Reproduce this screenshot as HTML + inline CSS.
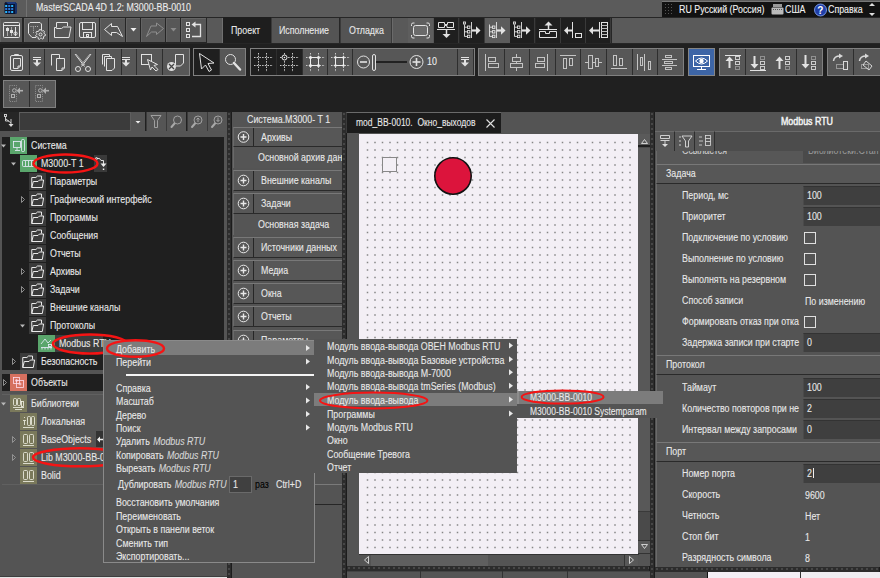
<!DOCTYPE html><html><head><meta charset="utf-8"><style>
*{margin:0;padding:0;box-sizing:border-box}
html,body{width:880px;height:578px;overflow:hidden;background:#202020;font-family:"Liberation Sans", sans-serif;}
body>div{position:absolute}
.t{position:absolute;white-space:nowrap;font-size:10px;line-height:12px;color:#e8e8e8;-webkit-text-stroke:0.1px;transform:scaleX(0.885);transform-origin:0 0}
svg{position:absolute;overflow:visible}
.spl{background-color:#2c2c2c;border-right:1px solid #1c1c1c;background-image:radial-gradient(circle at 2px 2px,#474747 0 1px,transparent 1.5px);background-size:5px 5px}
</style></head><body>
<div style="left:0px;top:0px;width:880px;height:17px;background:#5b5b5b"></div>
<div style="left:26px;top:0px;width:1px;height:17px;background:#737373"></div>
<svg style="left:0;top:0" width="880" height="578"><path d="M6 2 H15 L17 4 V12 Q17 14 15 14 H6.5 Q4.5 14 4.5 12 V3.5 Q4.5 2 6 2 Z" fill="#0a1430"/><path d="M6 2 H15 L17 4 H8 Z" fill="#1b3a80"/><path d="M15 2 L17 4 V13 L15 14 Z" fill="#15306a"/><rect x="5.2" y="5.0" width="2" height="2" fill="#27b8ff"/><rect x="5.2" y="8.0" width="2" height="2" fill="#2a78d8"/><rect x="5.2" y="11.0" width="2" height="2" fill="#27b8ff"/><rect x="8.2" y="5.0" width="2" height="2" fill="#2a78d8"/><rect x="8.2" y="8.0" width="2" height="2" fill="#2a78d8"/><rect x="8.2" y="11.0" width="2" height="2" fill="#2a78d8"/><rect x="11.2" y="5.0" width="2" height="2" fill="#27b8ff"/><rect x="11.2" y="8.0" width="2" height="2" fill="#2a78d8"/><rect x="11.2" y="11.0" width="2" height="2" fill="#27b8ff"/></svg>
<div class="t" style="left:36px;top:2px;color:#ececec">MasterSCADA 4D 1.2: M3000-BB-0010</div>
<div style="left:662px;top:1px;width:218px;height:18px;background:#121212;border-top:1px solid #777"></div>
<svg style="left:0;top:0" width="880" height="578"><g fill="#555"><rect x="665" y="4" width="1" height="1"/><rect x="665" y="7" width="1" height="1"/><rect x="665" y="10" width="1" height="1"/><rect x="665" y="13" width="1" height="1"/><rect x="668" y="4" width="1" height="1"/><rect x="668" y="7" width="1" height="1"/><rect x="668" y="10" width="1" height="1"/><rect x="668" y="13" width="1" height="1"/><rect x="671" y="4" width="1" height="1"/><rect x="671" y="7" width="1" height="1"/><rect x="671" y="10" width="1" height="1"/><rect x="671" y="13" width="1" height="1"/></g></svg>
<div class="t" style="left:679px;top:4px;color:#f2f2f2;">RU Русский (Россия)</div>
<svg style="left:0;top:0" width="880" height="578"><rect x="771.5" y="7.5" width="12" height="7" rx="1" fill="#bbb"/><rect x="773" y="4" width="9" height="3" fill="#999"/><rect x="773" y="9" width="1" height="1" fill="#555"/><rect x="775" y="9" width="1" height="1" fill="#555"/><rect x="777" y="9" width="1" height="1" fill="#555"/><rect x="779" y="9" width="1" height="1" fill="#555"/><rect x="781" y="9" width="1" height="1" fill="#555"/></svg>
<div class="t" style="left:785px;top:4px;color:#f2f2f2;">США</div>
<svg style="left:0;top:0" width="880" height="578"><circle cx="820.5" cy="10" r="6" fill="#1f3fa8" stroke="#8fb0ff" stroke-width="0.8"/><text x="817.3" y="14" font-family="Liberation Sans" font-weight="bold" font-size="10" fill="#fff">?</text></svg>
<div class="t" style="left:828px;top:4px;color:#f2f2f2;">Справка</div>
<svg style="left:0;top:0" width="880" height="578"><polygon points="869,6 875,6 872,3" fill="#ddd"/><polygon points="869,13 875,13 872,16" fill="#ddd"/></svg>
<div style="left:0px;top:17px;width:880px;height:27px;background:#262626"></div>
<div style="left:0px;top:18px;width:22px;height:24px;background:#575757;border-top:1px solid #656565;border-left:1px solid #636363"></div>
<div style="left:24px;top:18px;width:24px;height:24px;background:#575757;border-top:1px solid #656565;border-left:1px solid #636363"></div>
<div style="left:49px;top:18px;width:25px;height:24px;background:#575757;border-top:1px solid #656565;border-left:1px solid #636363"></div>
<div style="left:75px;top:18px;width:24px;height:24px;background:#575757;border-top:1px solid #656565;border-left:1px solid #636363"></div>
<div style="left:100px;top:18px;width:25px;height:24px;background:#575757;border-top:1px solid #656565;border-left:1px solid #636363"></div>
<div style="left:126px;top:18px;width:14px;height:24px;background:#575757;border-top:1px solid #656565;border-left:1px solid #636363"></div>
<div style="left:141px;top:18px;width:24px;height:24px;background:#575757;border-top:1px solid #656565;border-left:1px solid #636363"></div>
<div style="left:166px;top:18px;width:14px;height:24px;background:#575757;border-top:1px solid #656565;border-left:1px solid #636363"></div>
<div style="left:181px;top:18px;width:25px;height:24px;background:#575757;border-top:1px solid #656565;border-left:1px solid #636363"></div>
<div style="left:207px;top:18px;width:16px;height:25px;background:#595959;border-right:1px solid #707070"></div>
<div style="left:223px;top:17px;width:48px;height:26px;background:#1e1e1e"></div>
<div class="t" style="left:231px;top:25px;">Проект</div>
<div style="left:271px;top:18px;width:68px;height:25px;background:#545454;border-left:1px solid #3a3a3a"></div>
<div class="t" style="left:279px;top:25px;">Исполнение</div>
<div style="left:340px;top:18px;width:51px;height:25px;background:#545454;border-left:1px solid #3a3a3a"></div>
<div class="t" style="left:349px;top:25px;">Отладка</div>
<div style="left:391px;top:18px;width:1px;height:25px;background:#3a3a3a"></div>
<div style="left:392px;top:18px;width:16px;height:25px;background:#595959;border-left:1px solid #6a6a6a"></div>
<div style="left:408px;top:18px;width:25px;height:25px;background:#5e5e5e"></div>
<div style="left:433px;top:18px;width:1px;height:25px;background:#555"></div>
<div style="left:434px;top:18px;width:25px;height:25px;background:#1f1f1f;border-right:1px solid #3a3a3a"></div>
<div style="left:460px;top:18px;width:25px;height:25px;background:#1f1f1f;border-right:1px solid #3a3a3a"></div>
<div style="left:510px;top:18px;width:25px;height:25px;background:#1f1f1f;border-right:1px solid #3a3a3a"></div>
<div style="left:536px;top:18px;width:25px;height:25px;background:#1f1f1f;border-right:1px solid #3a3a3a"></div>
<div style="left:561px;top:18px;width:25px;height:25px;background:#1f1f1f;border-right:1px solid #3a3a3a"></div>
<div style="left:586px;top:18px;width:25px;height:25px;background:#1f1f1f;border-right:1px solid #3a3a3a"></div>
<div style="left:485px;top:18px;width:25px;height:25px;background:#5c5c5c"></div>
<div style="left:612px;top:18px;width:268px;height:25px;background:#5a5a5a"></div>
<div style="left:3px;top:48px;width:187px;height:28px;background:#2e2e2e;border:1px solid #808080"></div>
<div style="left:4px;top:49px;width:25px;height:26px;background:#575757"></div>
<div style="left:30px;top:49px;width:14px;height:26px;background:#575757"></div>
<div style="left:45px;top:49px;width:25px;height:26px;background:#575757"></div>
<div style="left:71px;top:49px;width:24px;height:26px;background:#575757"></div>
<div style="left:96px;top:49px;width:25px;height:26px;background:#575757"></div>
<div style="left:122px;top:49px;width:14px;height:26px;background:#575757"></div>
<div style="left:137px;top:49px;width:25px;height:26px;background:#575757"></div>
<div style="left:163px;top:49px;width:26px;height:26px;background:#575757"></div>
<div style="left:193px;top:48px;width:53px;height:28px;background:#2e2e2e;border:1px solid #808080"></div>
<div style="left:194px;top:49px;width:25px;height:26px;background:#1f1f1f"></div>
<div style="left:220px;top:49px;width:25px;height:26px;background:#575757"></div>
<div style="left:250px;top:48px;width:225px;height:28px;background:#2e2e2e;border:1px solid #808080"></div>
<div style="left:251px;top:49px;width:25px;height:26px;background:#1f1f1f"></div>
<div style="left:277px;top:49px;width:25px;height:26px;background:#1f1f1f"></div>
<div style="left:303px;top:49px;width:24px;height:26px;background:#575757"></div>
<div style="left:328px;top:49px;width:24px;height:26px;background:#575757"></div>
<div style="left:353px;top:49px;width:104px;height:26px;background:#575757"></div>
<div style="left:458px;top:49px;width:15px;height:26px;background:#575757"></div>
<div class="t" style="left:427px;top:56px;font-size:10px;color:#f0f0f0">10</div>
<div style="left:478px;top:48px;width:206px;height:28px;background:#2e2e2e;border:1px solid #808080"></div>
<div style="left:479.0px;top:49px;width:24.6px;height:26px;background:#575757"></div>
<div style="left:504.6px;top:49px;width:24.6px;height:26px;background:#575757"></div>
<div style="left:530.2px;top:49px;width:24.6px;height:26px;background:#575757"></div>
<div style="left:555.8px;top:49px;width:24.6px;height:26px;background:#575757"></div>
<div style="left:581.4px;top:49px;width:24.6px;height:26px;background:#575757"></div>
<div style="left:607.0px;top:49px;width:24.6px;height:26px;background:#575757"></div>
<div style="left:632.6px;top:49px;width:24.6px;height:26px;background:#575757"></div>
<div style="left:658.2px;top:49px;width:24.6px;height:26px;background:#575757"></div>
<div style="left:688px;top:48px;width:27px;height:28px;background:#3d65a6;border:1px solid #858585"></div>
<div style="left:719px;top:48px;width:104px;height:28px;background:#2e2e2e;border:1px solid #808080"></div>
<div style="left:720px;top:49px;width:25px;height:26px;background:#575757"></div>
<div style="left:746px;top:49px;width:25px;height:26px;background:#575757"></div>
<div style="left:771px;top:49px;width:25px;height:26px;background:#575757"></div>
<div style="left:797px;top:49px;width:25px;height:26px;background:#575757"></div>
<div style="left:827px;top:48px;width:55px;height:28px;background:#2e2e2e;border:1px solid #808080"></div>
<div style="left:828px;top:49px;width:25px;height:26px;background:#575757"></div>
<div style="left:854px;top:49px;width:26px;height:26px;background:#575757"></div>
<div style="left:3px;top:80px;width:53px;height:28px;background:#2e2e2e;border:1px solid #808080"></div>
<div style="left:4px;top:81px;width:25px;height:26px;background:#575757"></div>
<div style="left:30px;top:81px;width:25px;height:26px;background:#575757"></div>
<svg style="left:0;top:0" width="880" height="578"><g stroke="#e2e2e2" fill="none" stroke-width="1"><rect x="3.5" y="22.5" width="16" height="15" rx="1"/><line x1="3.5" y1="25.5" x2="19.5" y2="25.5"/><line x1="7.5" y1="27" x2="7.5" y2="36" stroke="#aaa"/><line x1="11.5" y1="27" x2="11.5" y2="36" stroke="#aaa"/><line x1="15.5" y1="27" x2="15.5" y2="36"/></g><g fill="#e2e2e2"><rect x="6" y="28" width="3" height="3"/><rect x="10" y="30" width="3" height="3"/><circle cx="15.5" cy="33.5" r="1.6" fill="none" stroke="#e2e2e2"/></g><g stroke="#e2e2e2" fill="none" stroke-width="1"><path d="M28.5 33.5 V24 L30 22.5 H40 L41.5 24 V30"/><path d="M28.5 33.5 L32 37.5 H36"/><path d="M30.5 26.5 H38" stroke="#bbb" stroke-dasharray="1 1.2"/><path d="M33.5 27.5 V33" stroke="#bbb" stroke-dasharray="1 1.2"/><path d="M45.50 34.50 L45.37 35.61 L43.92 36.15 L43.47 36.87 L43.62 38.41 L42.67 39.00 L41.35 38.20 L40.50 38.30 L39.39 39.37 L38.33 39.00 L38.13 37.47 L37.53 36.87 L36.00 36.67 L35.63 35.61 L36.70 34.50 L36.80 33.65 L36.00 32.33 L36.59 31.38 L38.13 31.53 L38.85 31.08 L39.39 29.63 L40.50 29.50 L41.35 30.80 L42.15 31.08 L43.62 30.59 L44.41 31.38 L43.92 32.85 L44.20 33.65 Z" fill="#575757"/><circle cx="40.5" cy="34.5" r="1.5"/></g><g stroke="#e2e2e2" fill="none" stroke-width="1"><path d="M56.5 27 V22.5 H67.5 V26"/><path d="M54.5 37.5 V27.5 H56.5 M54.5 37.5 H69 L71 27 H63.5 L61.5 28.5 H56.5 V27.5"/></g><g stroke="#e2e2e2" fill="none" stroke-width="1"><rect x="79.5" y="22.5" width="16" height="15" rx="1.5"/><rect x="82.5" y="22.5" width="10" height="7"/><rect x="83.5" y="32.5" width="8" height="5"/><rect x="86.5" y="34.5" width="2" height="2"/></g><polygon points="104.5,29.5 111.5,23.5 111.5,26.5 117.5,26.5 122.5,36.5 116.5,32.5 111.5,32.5 111.5,35.5" fill="none" stroke="#e2e2e2" stroke-linejoin="round"/><polygon points="130.5,28 136.5,28 133.5,31.5" fill="#eee"/><polygon points="163.5,28.5 156.5,23 156.5,26 151,26 146.5,36.5 151.5,32 156.5,32 156.5,34.5" fill="none" stroke="#8e8e8e" stroke-linejoin="round"/><polygon points="170.5,28 176.5,28 173.5,31.5" fill="#8a8a8a"/><g stroke="#e2e2e2" fill="none"><rect x="186.5" y="22.5" width="3" height="3"/><rect x="186.5" y="28.5" width="3" height="3"/><rect x="186.5" y="34.5" width="3" height="3"/><path d="M192 36.5 H200.5 V24.5 H194" stroke-width="1.3"/></g><polygon points="191.5,24.5 195.5,21.5 195.5,27.5" fill="#e2e2e2"/><g stroke="#e2e2e2" fill="none"><rect x="413.5" y="25.5" width="14" height="10" rx="2" fill="#6a6a6a"/><path d="M411.5 26 V24.5 Q411.5 23 413 23 H414.5 M426.5 23 H428 Q429.5 23 429.5 24.5 V26 M429.5 35 V36.5 Q429.5 38 428 38 H426.5 M414.5 38 H413 Q411.5 38 411.5 36.5 V35"/></g><g stroke="#e2e2e2" fill="none"><path d="M438.5 27.5 V22.5 H444.5 V24.5 H447.5 V22.5 H453.5 V27.5 H447 V25.5 H444.5 V27.5 Z"/><line x1="437" y1="29.5" x2="455" y2="29.5"/><line x1="446.5" y1="29.5" x2="446.5" y2="35" stroke-width="1.5"/></g><polygon points="442.5,34 450.5,34 446.5,38" fill="#e2e2e2"/><g stroke="#e2e2e2" fill="none" stroke-width="0.9"><rect x="463.5" y="22" width="2" height="2"/><line x1="464.5" y1="24.5" x2="464.5" y2="36.5"/><rect x="467.5" y="26.0" width="2.4" height="2.4"/><line x1="464.5" y1="27.2" x2="467.5" y2="27.2"/><rect x="467.5" y="30.6" width="2.4" height="2.4"/><line x1="464.5" y1="31.8" x2="467.5" y2="31.8"/><rect x="467.5" y="35.199999999999996" width="2.4" height="2.4"/><line x1="464.5" y1="36.4" x2="467.5" y2="36.4"/><line x1="471.5" y1="22" x2="471.5" y2="38"/><line x1="472" y1="30.5" x2="477" y2="30.5" stroke-width="2.2"/></g><polygon points="476,26.3 480.5,30.5 476,34.7" fill="#e2e2e2"/><g stroke="#e2e2e2" fill="none" stroke-width="0.9"><line x1="489.5" y1="24.5" x2="489.5" y2="36.5"/><rect x="492.5" y="26.0" width="2.4" height="2.4"/><line x1="489.5" y1="27.2" x2="492.5" y2="27.2"/><rect x="492.5" y="30.6" width="2.4" height="2.4"/><line x1="489.5" y1="31.8" x2="492.5" y2="31.8"/><rect x="492.5" y="35.199999999999996" width="2.4" height="2.4"/><line x1="489.5" y1="36.4" x2="492.5" y2="36.4"/><line x1="496.5" y1="22" x2="496.5" y2="38"/><line x1="497" y1="30.5" x2="502" y2="30.5" stroke-width="2.2"/></g><polygon points="501,26.3 505.5,30.5 501,34.7" fill="#e2e2e2"/><g stroke="#e2e2e2" fill="none" stroke-width="0.9"><rect x="513.5" y="22" width="2" height="2"/><line x1="514.5" y1="24.5" x2="514.5" y2="36.5"/><rect x="517.5" y="26.0" width="2.4" height="2.4"/><line x1="514.5" y1="27.2" x2="517.5" y2="27.2"/><rect x="517.5" y="30.6" width="2.4" height="2.4"/><line x1="514.5" y1="31.8" x2="517.5" y2="31.8"/><rect x="517.5" y="35.199999999999996" width="2.4" height="2.4"/><line x1="514.5" y1="36.4" x2="517.5" y2="36.4"/><line x1="521.5" y1="22" x2="521.5" y2="38"/><line x1="522" y1="30.5" x2="527" y2="30.5" stroke-width="2.2"/></g><polygon points="526,26.3 530.5,30.5 526,34.7" fill="#e2e2e2"/><g stroke="#e2e2e2" fill="none"><line x1="539" y1="29.5" x2="557" y2="29.5"/><line x1="548.5" y1="23" x2="548.5" y2="29" stroke-width="1.5"/><path d="M539.5 37.5 V31.5 H545.5 V33.5 H549.5 V31.5 H556.5 V37.5 Z"/></g><polygon points="544.5,25.5 552.5,25.5 548.5,21.5" fill="#e2e2e2"/><g stroke="#e2e2e2" fill="none"><line x1="572.5" y1="22" x2="572.5" y2="38"/><line x1="567" y1="30.5" x2="572" y2="30.5" stroke-width="2"/><rect x="575.5" y="33.5" width="6" height="4"/></g><polygon points="568,26.5 564,30.5 568,34.5" fill="#e2e2e2"/><g stroke="#e2e2e2" fill="none"><line x1="599.5" y1="22" x2="599.5" y2="38"/><line x1="592" y1="30.5" x2="599" y2="30.5" stroke-width="2"/><rect x="601.5" y="22.5" width="6" height="15"/><path d="M601.5 25.5 H607.5 M601.5 28.5 H607.5 M601.5 31.5 H607.5 M601.5 34.5 H607.5" stroke="#bbb"/></g><polygon points="593,26.5 589,30.5 593,34.5" fill="#e2e2e2"/><g stroke="#e2e2e2" fill="none"><rect x="10.5" y="55.5" width="12" height="15" rx="1.5"/><path d="M14.5 56 V54.5 H18.5 V56"/><path d="M13.5 58.5 H20.5 V66 L18 68.5 H13.5 Z"/><path d="M18 68.5 V66 H20.5"/></g><g stroke="#e2e2e2"><line x1="33" y1="57.5" x2="41" y2="57.5"/><line x1="33" y1="59.5" x2="41" y2="59.5"/></g><rect x="36" y="60" width="2" height="3" fill="#e2e2e2"/><polygon points="33,62.5 41,62.5 37,66.5" fill="#e2e2e2"/><g stroke="#e2e2e2"><line x1="122" y1="57.5" x2="130" y2="57.5"/><line x1="122" y1="59.5" x2="130" y2="59.5"/></g><rect x="125" y="60" width="2" height="3" fill="#e2e2e2"/><polygon points="122,62.5 130,62.5 126,66.5" fill="#e2e2e2"/><g stroke="#e2e2e2" fill="none"><path d="M51.5 65.5 V54.5 H59.5 V58.5"/><path d="M56.5 58.5 H64.5 V68 L62 70.5 H56.5 Z" /><path d="M62 70.5 V68 H64.5"/></g><g stroke="#e2e2e2" fill="none"><circle cx="78" cy="69" r="2.5"/><circle cx="88" cy="69" r="2.5"/><path d="M75 54 L84.5 66.5 M91 54 L81.5 66.5"/><path d="M76 54 L85 65 M90 54 L81 65" stroke="#aaa"/></g><g stroke="#e2e2e2" fill="none"><path d="M102.5 64.5 V54.5 H109.5 V56"/><path d="M104.5 66.5 V56.5 H111.5 V58"/><path d="M106.5 58.5 H114.5 V68 L112 70.5 H106.5 Z"/></g><g stroke="#e2e2e2" fill="none"><rect x="141.5" y="54.5" width="10" height="10"/><polygon points="147.5,59.5 157.5,64.5 154,65.5 158,69.5 156,71 152,67 150.5,70" fill="#5a5a5a"/></g><g stroke="#e2e2e2" fill="none"><path d="M175.5 65 V54.5 H183.5 V63 L180.5 66 H176"/></g><circle cx="171.5" cy="66.5" r="4.5" fill="#ddd"/><path d="M169 64 L174 69 M174 64 L169 69" stroke="#444" stroke-width="1.3"/><polygon points="199.5,53.5 214,63 208,63.5 211.5,70 209,71.5 205.5,65 201.5,69" fill="none" stroke="#e2e2e2" stroke-linejoin="round"/><g stroke="#e2e2e2" fill="none"><circle cx="230.5" cy="59.5" r="5"/><line x1="234" y1="63" x2="240" y2="69.5" stroke-width="2.5" stroke-linecap="round"/></g><g stroke="#c8c8c8" stroke-dasharray="1.5 1.2" fill="none"><line x1="258.5" y1="53" x2="258.5" y2="72"/><line x1="266.5" y1="53" x2="266.5" y2="72"/><line x1="254" y1="57.5" x2="273" y2="57.5"/><line x1="254" y1="65.5" x2="273" y2="65.5"/></g><g stroke="#c8c8c8" stroke-dasharray="1.5 1.2" fill="none"><line x1="284.5" y1="53" x2="284.5" y2="72"/><line x1="292.5" y1="53" x2="292.5" y2="72"/><line x1="280" y1="57.5" x2="299" y2="57.5"/><line x1="280" y1="65.5" x2="299" y2="65.5"/></g><circle cx="284.5" cy="57.5" r="2.5" fill="#222" stroke="#eee"/><circle cx="284.5" cy="57.5" r="0.8" fill="#eee"/><g stroke="#c8c8c8" stroke-dasharray="1.5 1.2" fill="none"><line x1="310.5" y1="53" x2="310.5" y2="72"/><line x1="318.5" y1="53" x2="318.5" y2="72"/><line x1="306" y1="57.5" x2="325" y2="57.5"/><line x1="306" y1="65.5" x2="325" y2="65.5"/></g><rect x="310.5" y="57.5" width="8" height="8" fill="none" stroke="#eee"/><circle cx="310.5" cy="57.5" r="1.5" fill="#eee"/><circle cx="318.5" cy="57.5" r="1.5" fill="#eee"/><circle cx="310.5" cy="65.5" r="1.5" fill="#eee"/><circle cx="318.5" cy="65.5" r="1.5" fill="#eee"/><g stroke="#c8c8c8" stroke-dasharray="1.5 1.2" fill="none"><line x1="335.5" y1="53" x2="335.5" y2="72"/><line x1="343.5" y1="53" x2="343.5" y2="72"/><line x1="331" y1="57.5" x2="350" y2="57.5"/><line x1="331" y1="65.5" x2="350" y2="65.5"/></g><rect x="335.5" y="57.5" width="8" height="8" fill="none" stroke="#eee"/><circle cx="335.5" cy="57.5" r="1.2" fill="#eee"/><circle cx="343.5" cy="57.5" r="1.2" fill="#eee"/><circle cx="335.5" cy="65.5" r="1.2" fill="#eee"/><circle cx="343.5" cy="65.5" r="1.2" fill="#eee"/><g stroke="#e2e2e2" fill="none"><circle cx="363.5" cy="62" r="6"/><line x1="360" y1="62" x2="367" y2="62" stroke-width="1.6"/><rect x="372.5" y="54.5" width="3" height="16" rx="1.5"/><line x1="376" y1="62" x2="407" y2="62" stroke="#222" stroke-width="2"/><circle cx="416.5" cy="62" r="6.5"/><line x1="412.5" y1="62" x2="420.5" y2="62" stroke-width="1.6"/><line x1="416.5" y1="58" x2="416.5" y2="66" stroke-width="1.6"/></g><g stroke="#e2e2e2"><line x1="461" y1="57.5" x2="469" y2="57.5"/><line x1="461" y1="59.5" x2="469" y2="59.5"/></g><rect x="464" y="60" width="2" height="3" fill="#e2e2e2"/><polygon points="461,62.5 469,62.5 465,66.5" fill="#e2e2e2"/><g stroke="#c4c4c4" fill="none"><line x1="485.5" y1="54" x2="485.5" y2="71"/><rect x="488.5" y="57.5" width="7" height="4"/><rect x="488.5" y="63.5" width="10" height="4"/><line x1="516.5" y1="54" x2="516.5" y2="71"/><rect x="512.5" y="57.5" width="8" height="4" fill="#5a5a5a"/><rect x="510.5" y="63.5" width="12" height="4" fill="#5a5a5a"/><line x1="547.5" y1="54" x2="547.5" y2="71"/><rect x="537.5" y="57.5" width="7" height="4"/><rect x="535.5" y="63.5" width="9" height="4"/><line x1="560" y1="55.5" x2="576" y2="55.5"/><rect x="563.5" y="58.5" width="3" height="10"/><rect x="569.5" y="58.5" width="3" height="7"/><line x1="585" y1="62.5" x2="602" y2="62.5"/><rect x="588.5" y="55.5" width="4" height="13" fill="#5a5a5a"/><rect x="595.5" y="58.5" width="3" height="8" fill="#5a5a5a"/><line x1="611" y1="68.5" x2="627" y2="68.5"/><rect x="613.5" y="55.5" width="3" height="10"/><rect x="619.5" y="58.5" width="3" height="7"/><line x1="637.5" y1="54" x2="637.5" y2="70"/><rect x="640.5" y="57.5" width="2" height="8"/><line x1="644.5" y1="54" x2="644.5" y2="71"/><rect x="648.5" y="61.5" width="2" height="8"/><rect x="665.5" y="55.5" width="6" height="2"/><line x1="662" y1="59.5" x2="677" y2="59.5"/><rect x="664.5" y="61.5" width="8" height="2"/><line x1="662" y1="65.5" x2="677" y2="65.5"/><rect x="665.5" y="67.5" width="6" height="2"/></g><g stroke="#fff" fill="none"><rect x="693.5" y="55.5" width="16" height="11"/><path d="M695.5 61 Q701.5 55 707.5 61 Q701.5 67 695.5 61 Z"/><line x1="697" y1="69.5" x2="706" y2="69.5"/><line x1="701.5" y1="67" x2="701.5" y2="69"/></g><circle cx="701.5" cy="61" r="2.2" fill="#fff"/><line x1="725" y1="55.5" x2="741" y2="55.5" stroke="#e2e2e2"/><line x1="729.5" y1="58" x2="729.5" y2="68" stroke="#e2e2e2" stroke-width="2"/><polygon points="725.5,61 733.5,61 729.5,56.5" fill="#e2e2e2"/><rect x="735.5" y="56.5" width="4" height="3" fill="none" stroke="#ccc" /><rect x="735.5" y="61.5" width="4" height="3" fill="none" stroke="#ccc" /><rect x="735.5" y="66.5" width="4" height="3" fill="none" stroke="#ccc" stroke-dasharray='1 1'/><line x1="750" y1="70.5" x2="766" y2="70.5" stroke="#e2e2e2"/><line x1="754.5" y1="56" x2="754.5" y2="65" stroke="#e2e2e2" stroke-width="2"/><polygon points="750.5,64 758.5,64 754.5,68.5" fill="#e2e2e2"/><rect x="760.5" y="56.5" width="4" height="3" fill="none" stroke="#ccc" stroke-dasharray='1 1'/><rect x="760.5" y="61.5" width="4" height="3" fill="none" stroke="#ccc" /><rect x="760.5" y="66.5" width="4" height="3" fill="none" stroke="#ccc" /><line x1="779.5" y1="58" x2="779.5" y2="69" stroke="#e2e2e2" stroke-width="2"/><polygon points="775.5,61 783.5,61 779.5,56.5" fill="#e2e2e2"/><rect x="785.5" y="56.5" width="4" height="3" fill="none" stroke="#ccc" /><rect x="785.5" y="61.5" width="4" height="3" fill="none" stroke="#ccc" /><rect x="785.5" y="66.5" width="4" height="3" fill="none" stroke="#ccc" stroke-dasharray='1 1'/><line x1="805.5" y1="55" x2="805.5" y2="66" stroke="#e2e2e2" stroke-width="2"/><polygon points="801.5,64 809.5,64 805.5,68.5" fill="#e2e2e2"/><rect x="811.5" y="56.5" width="4" height="3" fill="none" stroke="#ccc" stroke-dasharray='1 1'/><rect x="811.5" y="61.5" width="4" height="3" fill="none" stroke="#ccc" /><rect x="811.5" y="66.5" width="4" height="3" fill="none" stroke="#ccc" /><g stroke="#d8d8d8" fill="none"><path d="M833.5 61 Q834 56 840 56" stroke-width="1.5"/><rect x="836.5" y="64.5" width="7" height="4" stroke-dasharray="1 1"/><rect x="843.5" y="61.5" width="4" height="8"/><path d="M859.5 61 Q860 56 866 56" stroke-width="1.5"/><rect x="861.5" y="64.5" width="7" height="4" stroke-dasharray="1 1"/><polygon points="866,61 872,66 869,70 863,65"/></g><polygon points="839,53.5 843,56 839,58.5" fill="#d8d8d8"/><polygon points="865,53.5 869,56 865,58.5" fill="#d8d8d8"/><g stroke="#9a9a9a" fill="none" stroke-dasharray="1 1.2" stroke-width="0.9"><rect x="9.5" y="85.5" width="7" height="16"/></g><g stroke="#b0b0b0" fill="none"><circle cx="14.3" cy="90.5" r="1.8" fill="#5a5a5a"/><rect x="11.5" y="94.5" width="3" height="3" fill="#5a5a5a"/><line x1="18.5" y1="90.7" x2="23" y2="90.7" stroke-width="1.6"/></g><polygon points="20,87.5 16.5,90.7 20,94" fill="#b0b0b0"/><g stroke="#9a9a9a" fill="none" stroke-dasharray="1 1.2" stroke-width="0.9"><rect x="35.5" y="85.5" width="7" height="16"/></g><g stroke="#b0b0b0" fill="none"><circle cx="40.3" cy="90.5" r="1.8" fill="#5a5a5a"/><rect x="37.5" y="94.5" width="3" height="3" fill="#5a5a5a"/><line x1="44.5" y1="90.7" x2="49" y2="90.7" stroke-width="1.6"/></g><polygon points="46,87.5 42.5,90.7 46,94" fill="#b0b0b0"/></svg>
<div style="left:0px;top:112px;width:19px;height:19px;background:#262626"></div>
<svg style="left:0;top:0" width="880" height="578"><g stroke="#ddd" fill="none" stroke-width="0.9"><rect x="4.5" y="114.5" width="2" height="2"/><path d="M5.5 117 V121 H9 M6 119 L11 123 M11 119 V124"/></g><polygon points="8.5,124 13.5,124 11,127" fill="#ddd"/></svg>
<div style="left:19px;top:112px;width:112px;height:19px;background:#3b3b3b;border:1px solid #5e5e5e"></div>
<div style="left:131px;top:112px;width:14px;height:19px;background:#545454"></div>
<svg style="left:0;top:0" width="880" height="578"><polygon points="135.5,121 140.5,121 138,123.5" fill="#eee"/></svg>
<div style="left:146px;top:112px;width:20px;height:19px;background:#555;border-left:1px solid #3a3a3a"></div>
<div style="left:166px;top:112px;width:20px;height:19px;background:#555;border-left:1px solid #3a3a3a"></div>
<div style="left:187px;top:112px;width:20px;height:19px;background:#555;border-left:1px solid #3a3a3a"></div>
<div style="left:207px;top:112px;width:20px;height:19px;background:#555;border-left:1px solid #3a3a3a"></div>
<svg style="left:0;top:0" width="880" height="578"><g stroke="#a8a8a8" fill="none" stroke-width="0.9"><path d="M151 115.5 H161 L157.5 120.5 V127.5 H154.5 V120.5 Z"/><circle cx="177.5" cy="120" r="4"/><line x1="174.5" y1="123.5" x2="171.5" y2="127"  stroke-width="2" stroke-linecap="round"/><circle cx="198" cy="120" r="4"/><line x1="195" y1="123.5" x2="192" y2="127"  stroke-width="2" stroke-linecap="round"/><path d="M198 122 V118 M196.5 119.5 L198 118 L199.5 119.5"/><circle cx="218" cy="120" r="4"/><line x1="215" y1="123.5" x2="212" y2="127"  stroke-width="2" stroke-linecap="round"/><path d="M218 117.5 V121.5 M216.5 120 L218 121.5 L219.5 120"/></g></svg>
<div style="left:0px;top:131px;width:227px;height:447px;background:#545454"></div>
<div style="left:2px;top:137px;width:222px;height:233px;background:#1f1f1f"></div>
<div style="left:2px;top:374px;width:222px;height:17px;background:#1f1f1f"></div>
<div style="left:2px;top:394px;width:222px;height:1px;background:#606060"></div>
<div style="left:2px;top:484px;width:101px;height:1px;background:#606060"></div>
<div style="left:224px;top:137px;width:3px;height:441px;background:#545454"></div>
<div class="spl" style="left:227px;top:112px;width:5px;height:466px;"></div>
<div style="left:232px;top:112px;width:110px;height:466px;background:#545454"></div>
<div class="t" style="left:247px;top:114px;">Система.М3000- T 1</div>
<div style="left:233px;top:127px;width:109px;height:20px;background:#575757;border-top:1px solid #787878;border-bottom:1px solid #2a2a2a;border-left:1px solid #6a6a6a"></div>
<div style="left:253px;top:128px;width:1px;height:18px;background:#262626"></div>
<div class="t" style="left:261px;top:132px;">Архивы</div>
<div style="left:233px;top:147px;width:109px;height:21px;background:#555;border-left:1px solid #6a6a6a"></div>
<div class="t" style="left:258px;top:152px;">Основной архив дан</div>
<div style="left:233px;top:170px;width:109px;height:21px;background:#575757;border-top:1px solid #787878;border-bottom:1px solid #2a2a2a;border-left:1px solid #6a6a6a"></div>
<div style="left:253px;top:171px;width:1px;height:19px;background:#262626"></div>
<div class="t" style="left:261px;top:175px;">Внешние каналы</div>
<div style="left:233px;top:193px;width:109px;height:21px;background:#575757;border-top:1px solid #787878;border-bottom:1px solid #2a2a2a;border-left:1px solid #6a6a6a"></div>
<div style="left:253px;top:194px;width:1px;height:19px;background:#262626"></div>
<div class="t" style="left:261px;top:198px;">Задачи</div>
<div style="left:233px;top:214px;width:109px;height:21px;background:#555;border-left:1px solid #6a6a6a"></div>
<div class="t" style="left:258px;top:219px;">Основная задача</div>
<div style="left:233px;top:237px;width:109px;height:21px;background:#575757;border-top:1px solid #787878;border-bottom:1px solid #2a2a2a;border-left:1px solid #6a6a6a"></div>
<div style="left:253px;top:238px;width:1px;height:19px;background:#262626"></div>
<div class="t" style="left:261px;top:242px;">Источники данных</div>
<div style="left:233px;top:260px;width:109px;height:21px;background:#575757;border-top:1px solid #787878;border-bottom:1px solid #2a2a2a;border-left:1px solid #6a6a6a"></div>
<div style="left:253px;top:261px;width:1px;height:19px;background:#262626"></div>
<div class="t" style="left:261px;top:265px;">Медиа</div>
<div style="left:233px;top:283px;width:109px;height:21px;background:#575757;border-top:1px solid #787878;border-bottom:1px solid #2a2a2a;border-left:1px solid #6a6a6a"></div>
<div style="left:253px;top:284px;width:1px;height:19px;background:#262626"></div>
<div class="t" style="left:261px;top:288px;">Окна</div>
<div style="left:233px;top:306px;width:109px;height:21px;background:#575757;border-top:1px solid #787878;border-bottom:1px solid #2a2a2a;border-left:1px solid #6a6a6a"></div>
<div style="left:253px;top:307px;width:1px;height:19px;background:#262626"></div>
<div class="t" style="left:261px;top:311px;">Отчеты</div>
<div style="left:233px;top:330px;width:109px;height:21px;background:#575757;border-top:1px solid #787878;border-bottom:1px solid #2a2a2a;border-left:1px solid #6a6a6a"></div>
<div style="left:253px;top:331px;width:1px;height:19px;background:#262626"></div>
<div class="t" style="left:261px;top:335px;">Параметры</div>
<svg style="left:0;top:0" width="880" height="578"><circle cx="243.5" cy="137.0" r="5.3" fill="none" stroke="#e8e8e8" stroke-width="1"/><path d="M240.5 137.0 H246.5 M243.5 134.0 V140.0" stroke="#e8e8e8" stroke-width="1.4"/><circle cx="243.5" cy="180.5" r="5.3" fill="none" stroke="#e8e8e8" stroke-width="1"/><path d="M240.5 180.5 H246.5 M243.5 177.5 V183.5" stroke="#e8e8e8" stroke-width="1.4"/><circle cx="243.5" cy="203.5" r="5.3" fill="none" stroke="#e8e8e8" stroke-width="1"/><path d="M240.5 203.5 H246.5 M243.5 200.5 V206.5" stroke="#e8e8e8" stroke-width="1.4"/><circle cx="243.5" cy="247.5" r="5.3" fill="none" stroke="#e8e8e8" stroke-width="1"/><path d="M240.5 247.5 H246.5 M243.5 244.5 V250.5" stroke="#e8e8e8" stroke-width="1.4"/><circle cx="243.5" cy="270.5" r="5.3" fill="none" stroke="#e8e8e8" stroke-width="1"/><path d="M240.5 270.5 H246.5 M243.5 267.5 V273.5" stroke="#e8e8e8" stroke-width="1.4"/><circle cx="243.5" cy="293.5" r="5.3" fill="none" stroke="#e8e8e8" stroke-width="1"/><path d="M240.5 293.5 H246.5 M243.5 290.5 V296.5" stroke="#e8e8e8" stroke-width="1.4"/><circle cx="243.5" cy="316.5" r="5.3" fill="none" stroke="#e8e8e8" stroke-width="1"/><path d="M240.5 316.5 H246.5 M243.5 313.5 V319.5" stroke="#e8e8e8" stroke-width="1.4"/><circle cx="243.5" cy="340.5" r="5.3" fill="none" stroke="#e8e8e8" stroke-width="1"/><path d="M240.5 340.5 H246.5 M243.5 337.5 V343.5" stroke="#e8e8e8" stroke-width="1.4"/></svg>
<div style="left:233px;top:484px;width:109px;height:1px;background:#7a7a7a"></div>
<div style="left:233px;top:504px;width:109px;height:1px;background:#262626"></div>
<div class="spl" style="left:342px;top:112px;width:5px;height:466px;"></div>
<div style="left:347px;top:112px;width:303px;height:460px;background:#545454"></div>
<div style="left:346px;top:112px;width:155px;height:21px;background:#1c1c1c;border-top:1px solid #6a6a6a;border-left:1px solid #3a3a3a"></div>
<div class="t" style="left:356px;top:117px;transform:scaleX(0.85)">mod_BB-0010.&nbsp; Окно_выходов</div>
<svg style="left:0;top:0" width="880" height="578"><path d="M486.5 119.5 L494.5 127.5 M494.5 119.5 L486.5 127.5" stroke="#e0e0e0" stroke-width="1.1"/></svg>
<div style="left:359px;top:134px;width:279px;height:420px;background:#f3eff5"></div>
<svg style="left:0;top:0" width="880" height="578"><g fill="#868686"><rect x="366.75" y="141.75" width="1.5" height="1.5"/><rect x="374.25" y="141.75" width="1.5" height="1.5"/><rect x="381.75" y="141.75" width="1.5" height="1.5"/><rect x="389.25" y="141.75" width="1.5" height="1.5"/><rect x="396.75" y="141.75" width="1.5" height="1.5"/><rect x="404.25" y="141.75" width="1.5" height="1.5"/><rect x="411.75" y="141.75" width="1.5" height="1.5"/><rect x="419.25" y="141.75" width="1.5" height="1.5"/><rect x="426.75" y="141.75" width="1.5" height="1.5"/><rect x="434.25" y="141.75" width="1.5" height="1.5"/><rect x="441.75" y="141.75" width="1.5" height="1.5"/><rect x="449.25" y="141.75" width="1.5" height="1.5"/><rect x="456.75" y="141.75" width="1.5" height="1.5"/><rect x="464.25" y="141.75" width="1.5" height="1.5"/><rect x="471.75" y="141.75" width="1.5" height="1.5"/><rect x="479.25" y="141.75" width="1.5" height="1.5"/><rect x="486.75" y="141.75" width="1.5" height="1.5"/><rect x="494.25" y="141.75" width="1.5" height="1.5"/><rect x="501.75" y="141.75" width="1.5" height="1.5"/><rect x="509.25" y="141.75" width="1.5" height="1.5"/><rect x="516.75" y="141.75" width="1.5" height="1.5"/><rect x="524.25" y="141.75" width="1.5" height="1.5"/><rect x="531.75" y="141.75" width="1.5" height="1.5"/><rect x="539.25" y="141.75" width="1.5" height="1.5"/><rect x="546.75" y="141.75" width="1.5" height="1.5"/><rect x="554.25" y="141.75" width="1.5" height="1.5"/><rect x="561.75" y="141.75" width="1.5" height="1.5"/><rect x="569.25" y="141.75" width="1.5" height="1.5"/><rect x="576.75" y="141.75" width="1.5" height="1.5"/><rect x="584.25" y="141.75" width="1.5" height="1.5"/><rect x="591.75" y="141.75" width="1.5" height="1.5"/><rect x="599.25" y="141.75" width="1.5" height="1.5"/><rect x="606.75" y="141.75" width="1.5" height="1.5"/><rect x="614.25" y="141.75" width="1.5" height="1.5"/><rect x="621.75" y="141.75" width="1.5" height="1.5"/><rect x="629.25" y="141.75" width="1.5" height="1.5"/><rect x="366.75" y="149.25" width="1.5" height="1.5"/><rect x="374.25" y="149.25" width="1.5" height="1.5"/><rect x="381.75" y="149.25" width="1.5" height="1.5"/><rect x="389.25" y="149.25" width="1.5" height="1.5"/><rect x="396.75" y="149.25" width="1.5" height="1.5"/><rect x="404.25" y="149.25" width="1.5" height="1.5"/><rect x="411.75" y="149.25" width="1.5" height="1.5"/><rect x="419.25" y="149.25" width="1.5" height="1.5"/><rect x="426.75" y="149.25" width="1.5" height="1.5"/><rect x="434.25" y="149.25" width="1.5" height="1.5"/><rect x="441.75" y="149.25" width="1.5" height="1.5"/><rect x="449.25" y="149.25" width="1.5" height="1.5"/><rect x="456.75" y="149.25" width="1.5" height="1.5"/><rect x="464.25" y="149.25" width="1.5" height="1.5"/><rect x="471.75" y="149.25" width="1.5" height="1.5"/><rect x="479.25" y="149.25" width="1.5" height="1.5"/><rect x="486.75" y="149.25" width="1.5" height="1.5"/><rect x="494.25" y="149.25" width="1.5" height="1.5"/><rect x="501.75" y="149.25" width="1.5" height="1.5"/><rect x="509.25" y="149.25" width="1.5" height="1.5"/><rect x="516.75" y="149.25" width="1.5" height="1.5"/><rect x="524.25" y="149.25" width="1.5" height="1.5"/><rect x="531.75" y="149.25" width="1.5" height="1.5"/><rect x="539.25" y="149.25" width="1.5" height="1.5"/><rect x="546.75" y="149.25" width="1.5" height="1.5"/><rect x="554.25" y="149.25" width="1.5" height="1.5"/><rect x="561.75" y="149.25" width="1.5" height="1.5"/><rect x="569.25" y="149.25" width="1.5" height="1.5"/><rect x="576.75" y="149.25" width="1.5" height="1.5"/><rect x="584.25" y="149.25" width="1.5" height="1.5"/><rect x="591.75" y="149.25" width="1.5" height="1.5"/><rect x="599.25" y="149.25" width="1.5" height="1.5"/><rect x="606.75" y="149.25" width="1.5" height="1.5"/><rect x="614.25" y="149.25" width="1.5" height="1.5"/><rect x="621.75" y="149.25" width="1.5" height="1.5"/><rect x="629.25" y="149.25" width="1.5" height="1.5"/><rect x="366.75" y="156.75" width="1.5" height="1.5"/><rect x="374.25" y="156.75" width="1.5" height="1.5"/><rect x="381.75" y="156.75" width="1.5" height="1.5"/><rect x="389.25" y="156.75" width="1.5" height="1.5"/><rect x="396.75" y="156.75" width="1.5" height="1.5"/><rect x="404.25" y="156.75" width="1.5" height="1.5"/><rect x="411.75" y="156.75" width="1.5" height="1.5"/><rect x="419.25" y="156.75" width="1.5" height="1.5"/><rect x="426.75" y="156.75" width="1.5" height="1.5"/><rect x="434.25" y="156.75" width="1.5" height="1.5"/><rect x="441.75" y="156.75" width="1.5" height="1.5"/><rect x="449.25" y="156.75" width="1.5" height="1.5"/><rect x="456.75" y="156.75" width="1.5" height="1.5"/><rect x="464.25" y="156.75" width="1.5" height="1.5"/><rect x="471.75" y="156.75" width="1.5" height="1.5"/><rect x="479.25" y="156.75" width="1.5" height="1.5"/><rect x="486.75" y="156.75" width="1.5" height="1.5"/><rect x="494.25" y="156.75" width="1.5" height="1.5"/><rect x="501.75" y="156.75" width="1.5" height="1.5"/><rect x="509.25" y="156.75" width="1.5" height="1.5"/><rect x="516.75" y="156.75" width="1.5" height="1.5"/><rect x="524.25" y="156.75" width="1.5" height="1.5"/><rect x="531.75" y="156.75" width="1.5" height="1.5"/><rect x="539.25" y="156.75" width="1.5" height="1.5"/><rect x="546.75" y="156.75" width="1.5" height="1.5"/><rect x="554.25" y="156.75" width="1.5" height="1.5"/><rect x="561.75" y="156.75" width="1.5" height="1.5"/><rect x="569.25" y="156.75" width="1.5" height="1.5"/><rect x="576.75" y="156.75" width="1.5" height="1.5"/><rect x="584.25" y="156.75" width="1.5" height="1.5"/><rect x="591.75" y="156.75" width="1.5" height="1.5"/><rect x="599.25" y="156.75" width="1.5" height="1.5"/><rect x="606.75" y="156.75" width="1.5" height="1.5"/><rect x="614.25" y="156.75" width="1.5" height="1.5"/><rect x="621.75" y="156.75" width="1.5" height="1.5"/><rect x="629.25" y="156.75" width="1.5" height="1.5"/><rect x="366.75" y="164.25" width="1.5" height="1.5"/><rect x="374.25" y="164.25" width="1.5" height="1.5"/><rect x="381.75" y="164.25" width="1.5" height="1.5"/><rect x="389.25" y="164.25" width="1.5" height="1.5"/><rect x="396.75" y="164.25" width="1.5" height="1.5"/><rect x="404.25" y="164.25" width="1.5" height="1.5"/><rect x="411.75" y="164.25" width="1.5" height="1.5"/><rect x="419.25" y="164.25" width="1.5" height="1.5"/><rect x="426.75" y="164.25" width="1.5" height="1.5"/><rect x="434.25" y="164.25" width="1.5" height="1.5"/><rect x="441.75" y="164.25" width="1.5" height="1.5"/><rect x="449.25" y="164.25" width="1.5" height="1.5"/><rect x="456.75" y="164.25" width="1.5" height="1.5"/><rect x="464.25" y="164.25" width="1.5" height="1.5"/><rect x="471.75" y="164.25" width="1.5" height="1.5"/><rect x="479.25" y="164.25" width="1.5" height="1.5"/><rect x="486.75" y="164.25" width="1.5" height="1.5"/><rect x="494.25" y="164.25" width="1.5" height="1.5"/><rect x="501.75" y="164.25" width="1.5" height="1.5"/><rect x="509.25" y="164.25" width="1.5" height="1.5"/><rect x="516.75" y="164.25" width="1.5" height="1.5"/><rect x="524.25" y="164.25" width="1.5" height="1.5"/><rect x="531.75" y="164.25" width="1.5" height="1.5"/><rect x="539.25" y="164.25" width="1.5" height="1.5"/><rect x="546.75" y="164.25" width="1.5" height="1.5"/><rect x="554.25" y="164.25" width="1.5" height="1.5"/><rect x="561.75" y="164.25" width="1.5" height="1.5"/><rect x="569.25" y="164.25" width="1.5" height="1.5"/><rect x="576.75" y="164.25" width="1.5" height="1.5"/><rect x="584.25" y="164.25" width="1.5" height="1.5"/><rect x="591.75" y="164.25" width="1.5" height="1.5"/><rect x="599.25" y="164.25" width="1.5" height="1.5"/><rect x="606.75" y="164.25" width="1.5" height="1.5"/><rect x="614.25" y="164.25" width="1.5" height="1.5"/><rect x="621.75" y="164.25" width="1.5" height="1.5"/><rect x="629.25" y="164.25" width="1.5" height="1.5"/><rect x="366.75" y="171.75" width="1.5" height="1.5"/><rect x="374.25" y="171.75" width="1.5" height="1.5"/><rect x="381.75" y="171.75" width="1.5" height="1.5"/><rect x="389.25" y="171.75" width="1.5" height="1.5"/><rect x="396.75" y="171.75" width="1.5" height="1.5"/><rect x="404.25" y="171.75" width="1.5" height="1.5"/><rect x="411.75" y="171.75" width="1.5" height="1.5"/><rect x="419.25" y="171.75" width="1.5" height="1.5"/><rect x="426.75" y="171.75" width="1.5" height="1.5"/><rect x="434.25" y="171.75" width="1.5" height="1.5"/><rect x="441.75" y="171.75" width="1.5" height="1.5"/><rect x="449.25" y="171.75" width="1.5" height="1.5"/><rect x="456.75" y="171.75" width="1.5" height="1.5"/><rect x="464.25" y="171.75" width="1.5" height="1.5"/><rect x="471.75" y="171.75" width="1.5" height="1.5"/><rect x="479.25" y="171.75" width="1.5" height="1.5"/><rect x="486.75" y="171.75" width="1.5" height="1.5"/><rect x="494.25" y="171.75" width="1.5" height="1.5"/><rect x="501.75" y="171.75" width="1.5" height="1.5"/><rect x="509.25" y="171.75" width="1.5" height="1.5"/><rect x="516.75" y="171.75" width="1.5" height="1.5"/><rect x="524.25" y="171.75" width="1.5" height="1.5"/><rect x="531.75" y="171.75" width="1.5" height="1.5"/><rect x="539.25" y="171.75" width="1.5" height="1.5"/><rect x="546.75" y="171.75" width="1.5" height="1.5"/><rect x="554.25" y="171.75" width="1.5" height="1.5"/><rect x="561.75" y="171.75" width="1.5" height="1.5"/><rect x="569.25" y="171.75" width="1.5" height="1.5"/><rect x="576.75" y="171.75" width="1.5" height="1.5"/><rect x="584.25" y="171.75" width="1.5" height="1.5"/><rect x="591.75" y="171.75" width="1.5" height="1.5"/><rect x="599.25" y="171.75" width="1.5" height="1.5"/><rect x="606.75" y="171.75" width="1.5" height="1.5"/><rect x="614.25" y="171.75" width="1.5" height="1.5"/><rect x="621.75" y="171.75" width="1.5" height="1.5"/><rect x="629.25" y="171.75" width="1.5" height="1.5"/><rect x="366.75" y="179.25" width="1.5" height="1.5"/><rect x="374.25" y="179.25" width="1.5" height="1.5"/><rect x="381.75" y="179.25" width="1.5" height="1.5"/><rect x="389.25" y="179.25" width="1.5" height="1.5"/><rect x="396.75" y="179.25" width="1.5" height="1.5"/><rect x="404.25" y="179.25" width="1.5" height="1.5"/><rect x="411.75" y="179.25" width="1.5" height="1.5"/><rect x="419.25" y="179.25" width="1.5" height="1.5"/><rect x="426.75" y="179.25" width="1.5" height="1.5"/><rect x="434.25" y="179.25" width="1.5" height="1.5"/><rect x="441.75" y="179.25" width="1.5" height="1.5"/><rect x="449.25" y="179.25" width="1.5" height="1.5"/><rect x="456.75" y="179.25" width="1.5" height="1.5"/><rect x="464.25" y="179.25" width="1.5" height="1.5"/><rect x="471.75" y="179.25" width="1.5" height="1.5"/><rect x="479.25" y="179.25" width="1.5" height="1.5"/><rect x="486.75" y="179.25" width="1.5" height="1.5"/><rect x="494.25" y="179.25" width="1.5" height="1.5"/><rect x="501.75" y="179.25" width="1.5" height="1.5"/><rect x="509.25" y="179.25" width="1.5" height="1.5"/><rect x="516.75" y="179.25" width="1.5" height="1.5"/><rect x="524.25" y="179.25" width="1.5" height="1.5"/><rect x="531.75" y="179.25" width="1.5" height="1.5"/><rect x="539.25" y="179.25" width="1.5" height="1.5"/><rect x="546.75" y="179.25" width="1.5" height="1.5"/><rect x="554.25" y="179.25" width="1.5" height="1.5"/><rect x="561.75" y="179.25" width="1.5" height="1.5"/><rect x="569.25" y="179.25" width="1.5" height="1.5"/><rect x="576.75" y="179.25" width="1.5" height="1.5"/><rect x="584.25" y="179.25" width="1.5" height="1.5"/><rect x="591.75" y="179.25" width="1.5" height="1.5"/><rect x="599.25" y="179.25" width="1.5" height="1.5"/><rect x="606.75" y="179.25" width="1.5" height="1.5"/><rect x="614.25" y="179.25" width="1.5" height="1.5"/><rect x="621.75" y="179.25" width="1.5" height="1.5"/><rect x="629.25" y="179.25" width="1.5" height="1.5"/><rect x="366.75" y="186.75" width="1.5" height="1.5"/><rect x="374.25" y="186.75" width="1.5" height="1.5"/><rect x="381.75" y="186.75" width="1.5" height="1.5"/><rect x="389.25" y="186.75" width="1.5" height="1.5"/><rect x="396.75" y="186.75" width="1.5" height="1.5"/><rect x="404.25" y="186.75" width="1.5" height="1.5"/><rect x="411.75" y="186.75" width="1.5" height="1.5"/><rect x="419.25" y="186.75" width="1.5" height="1.5"/><rect x="426.75" y="186.75" width="1.5" height="1.5"/><rect x="434.25" y="186.75" width="1.5" height="1.5"/><rect x="441.75" y="186.75" width="1.5" height="1.5"/><rect x="449.25" y="186.75" width="1.5" height="1.5"/><rect x="456.75" y="186.75" width="1.5" height="1.5"/><rect x="464.25" y="186.75" width="1.5" height="1.5"/><rect x="471.75" y="186.75" width="1.5" height="1.5"/><rect x="479.25" y="186.75" width="1.5" height="1.5"/><rect x="486.75" y="186.75" width="1.5" height="1.5"/><rect x="494.25" y="186.75" width="1.5" height="1.5"/><rect x="501.75" y="186.75" width="1.5" height="1.5"/><rect x="509.25" y="186.75" width="1.5" height="1.5"/><rect x="516.75" y="186.75" width="1.5" height="1.5"/><rect x="524.25" y="186.75" width="1.5" height="1.5"/><rect x="531.75" y="186.75" width="1.5" height="1.5"/><rect x="539.25" y="186.75" width="1.5" height="1.5"/><rect x="546.75" y="186.75" width="1.5" height="1.5"/><rect x="554.25" y="186.75" width="1.5" height="1.5"/><rect x="561.75" y="186.75" width="1.5" height="1.5"/><rect x="569.25" y="186.75" width="1.5" height="1.5"/><rect x="576.75" y="186.75" width="1.5" height="1.5"/><rect x="584.25" y="186.75" width="1.5" height="1.5"/><rect x="591.75" y="186.75" width="1.5" height="1.5"/><rect x="599.25" y="186.75" width="1.5" height="1.5"/><rect x="606.75" y="186.75" width="1.5" height="1.5"/><rect x="614.25" y="186.75" width="1.5" height="1.5"/><rect x="621.75" y="186.75" width="1.5" height="1.5"/><rect x="629.25" y="186.75" width="1.5" height="1.5"/><rect x="366.75" y="194.25" width="1.5" height="1.5"/><rect x="374.25" y="194.25" width="1.5" height="1.5"/><rect x="381.75" y="194.25" width="1.5" height="1.5"/><rect x="389.25" y="194.25" width="1.5" height="1.5"/><rect x="396.75" y="194.25" width="1.5" height="1.5"/><rect x="404.25" y="194.25" width="1.5" height="1.5"/><rect x="411.75" y="194.25" width="1.5" height="1.5"/><rect x="419.25" y="194.25" width="1.5" height="1.5"/><rect x="426.75" y="194.25" width="1.5" height="1.5"/><rect x="434.25" y="194.25" width="1.5" height="1.5"/><rect x="441.75" y="194.25" width="1.5" height="1.5"/><rect x="449.25" y="194.25" width="1.5" height="1.5"/><rect x="456.75" y="194.25" width="1.5" height="1.5"/><rect x="464.25" y="194.25" width="1.5" height="1.5"/><rect x="471.75" y="194.25" width="1.5" height="1.5"/><rect x="479.25" y="194.25" width="1.5" height="1.5"/><rect x="486.75" y="194.25" width="1.5" height="1.5"/><rect x="494.25" y="194.25" width="1.5" height="1.5"/><rect x="501.75" y="194.25" width="1.5" height="1.5"/><rect x="509.25" y="194.25" width="1.5" height="1.5"/><rect x="516.75" y="194.25" width="1.5" height="1.5"/><rect x="524.25" y="194.25" width="1.5" height="1.5"/><rect x="531.75" y="194.25" width="1.5" height="1.5"/><rect x="539.25" y="194.25" width="1.5" height="1.5"/><rect x="546.75" y="194.25" width="1.5" height="1.5"/><rect x="554.25" y="194.25" width="1.5" height="1.5"/><rect x="561.75" y="194.25" width="1.5" height="1.5"/><rect x="569.25" y="194.25" width="1.5" height="1.5"/><rect x="576.75" y="194.25" width="1.5" height="1.5"/><rect x="584.25" y="194.25" width="1.5" height="1.5"/><rect x="591.75" y="194.25" width="1.5" height="1.5"/><rect x="599.25" y="194.25" width="1.5" height="1.5"/><rect x="606.75" y="194.25" width="1.5" height="1.5"/><rect x="614.25" y="194.25" width="1.5" height="1.5"/><rect x="621.75" y="194.25" width="1.5" height="1.5"/><rect x="629.25" y="194.25" width="1.5" height="1.5"/><rect x="366.75" y="201.75" width="1.5" height="1.5"/><rect x="374.25" y="201.75" width="1.5" height="1.5"/><rect x="381.75" y="201.75" width="1.5" height="1.5"/><rect x="389.25" y="201.75" width="1.5" height="1.5"/><rect x="396.75" y="201.75" width="1.5" height="1.5"/><rect x="404.25" y="201.75" width="1.5" height="1.5"/><rect x="411.75" y="201.75" width="1.5" height="1.5"/><rect x="419.25" y="201.75" width="1.5" height="1.5"/><rect x="426.75" y="201.75" width="1.5" height="1.5"/><rect x="434.25" y="201.75" width="1.5" height="1.5"/><rect x="441.75" y="201.75" width="1.5" height="1.5"/><rect x="449.25" y="201.75" width="1.5" height="1.5"/><rect x="456.75" y="201.75" width="1.5" height="1.5"/><rect x="464.25" y="201.75" width="1.5" height="1.5"/><rect x="471.75" y="201.75" width="1.5" height="1.5"/><rect x="479.25" y="201.75" width="1.5" height="1.5"/><rect x="486.75" y="201.75" width="1.5" height="1.5"/><rect x="494.25" y="201.75" width="1.5" height="1.5"/><rect x="501.75" y="201.75" width="1.5" height="1.5"/><rect x="509.25" y="201.75" width="1.5" height="1.5"/><rect x="516.75" y="201.75" width="1.5" height="1.5"/><rect x="524.25" y="201.75" width="1.5" height="1.5"/><rect x="531.75" y="201.75" width="1.5" height="1.5"/><rect x="539.25" y="201.75" width="1.5" height="1.5"/><rect x="546.75" y="201.75" width="1.5" height="1.5"/><rect x="554.25" y="201.75" width="1.5" height="1.5"/><rect x="561.75" y="201.75" width="1.5" height="1.5"/><rect x="569.25" y="201.75" width="1.5" height="1.5"/><rect x="576.75" y="201.75" width="1.5" height="1.5"/><rect x="584.25" y="201.75" width="1.5" height="1.5"/><rect x="591.75" y="201.75" width="1.5" height="1.5"/><rect x="599.25" y="201.75" width="1.5" height="1.5"/><rect x="606.75" y="201.75" width="1.5" height="1.5"/><rect x="614.25" y="201.75" width="1.5" height="1.5"/><rect x="621.75" y="201.75" width="1.5" height="1.5"/><rect x="629.25" y="201.75" width="1.5" height="1.5"/><rect x="366.75" y="209.25" width="1.5" height="1.5"/><rect x="374.25" y="209.25" width="1.5" height="1.5"/><rect x="381.75" y="209.25" width="1.5" height="1.5"/><rect x="389.25" y="209.25" width="1.5" height="1.5"/><rect x="396.75" y="209.25" width="1.5" height="1.5"/><rect x="404.25" y="209.25" width="1.5" height="1.5"/><rect x="411.75" y="209.25" width="1.5" height="1.5"/><rect x="419.25" y="209.25" width="1.5" height="1.5"/><rect x="426.75" y="209.25" width="1.5" height="1.5"/><rect x="434.25" y="209.25" width="1.5" height="1.5"/><rect x="441.75" y="209.25" width="1.5" height="1.5"/><rect x="449.25" y="209.25" width="1.5" height="1.5"/><rect x="456.75" y="209.25" width="1.5" height="1.5"/><rect x="464.25" y="209.25" width="1.5" height="1.5"/><rect x="471.75" y="209.25" width="1.5" height="1.5"/><rect x="479.25" y="209.25" width="1.5" height="1.5"/><rect x="486.75" y="209.25" width="1.5" height="1.5"/><rect x="494.25" y="209.25" width="1.5" height="1.5"/><rect x="501.75" y="209.25" width="1.5" height="1.5"/><rect x="509.25" y="209.25" width="1.5" height="1.5"/><rect x="516.75" y="209.25" width="1.5" height="1.5"/><rect x="524.25" y="209.25" width="1.5" height="1.5"/><rect x="531.75" y="209.25" width="1.5" height="1.5"/><rect x="539.25" y="209.25" width="1.5" height="1.5"/><rect x="546.75" y="209.25" width="1.5" height="1.5"/><rect x="554.25" y="209.25" width="1.5" height="1.5"/><rect x="561.75" y="209.25" width="1.5" height="1.5"/><rect x="569.25" y="209.25" width="1.5" height="1.5"/><rect x="576.75" y="209.25" width="1.5" height="1.5"/><rect x="584.25" y="209.25" width="1.5" height="1.5"/><rect x="591.75" y="209.25" width="1.5" height="1.5"/><rect x="599.25" y="209.25" width="1.5" height="1.5"/><rect x="606.75" y="209.25" width="1.5" height="1.5"/><rect x="614.25" y="209.25" width="1.5" height="1.5"/><rect x="621.75" y="209.25" width="1.5" height="1.5"/><rect x="629.25" y="209.25" width="1.5" height="1.5"/><rect x="366.75" y="216.75" width="1.5" height="1.5"/><rect x="374.25" y="216.75" width="1.5" height="1.5"/><rect x="381.75" y="216.75" width="1.5" height="1.5"/><rect x="389.25" y="216.75" width="1.5" height="1.5"/><rect x="396.75" y="216.75" width="1.5" height="1.5"/><rect x="404.25" y="216.75" width="1.5" height="1.5"/><rect x="411.75" y="216.75" width="1.5" height="1.5"/><rect x="419.25" y="216.75" width="1.5" height="1.5"/><rect x="426.75" y="216.75" width="1.5" height="1.5"/><rect x="434.25" y="216.75" width="1.5" height="1.5"/><rect x="441.75" y="216.75" width="1.5" height="1.5"/><rect x="449.25" y="216.75" width="1.5" height="1.5"/><rect x="456.75" y="216.75" width="1.5" height="1.5"/><rect x="464.25" y="216.75" width="1.5" height="1.5"/><rect x="471.75" y="216.75" width="1.5" height="1.5"/><rect x="479.25" y="216.75" width="1.5" height="1.5"/><rect x="486.75" y="216.75" width="1.5" height="1.5"/><rect x="494.25" y="216.75" width="1.5" height="1.5"/><rect x="501.75" y="216.75" width="1.5" height="1.5"/><rect x="509.25" y="216.75" width="1.5" height="1.5"/><rect x="516.75" y="216.75" width="1.5" height="1.5"/><rect x="524.25" y="216.75" width="1.5" height="1.5"/><rect x="531.75" y="216.75" width="1.5" height="1.5"/><rect x="539.25" y="216.75" width="1.5" height="1.5"/><rect x="546.75" y="216.75" width="1.5" height="1.5"/><rect x="554.25" y="216.75" width="1.5" height="1.5"/><rect x="561.75" y="216.75" width="1.5" height="1.5"/><rect x="569.25" y="216.75" width="1.5" height="1.5"/><rect x="576.75" y="216.75" width="1.5" height="1.5"/><rect x="584.25" y="216.75" width="1.5" height="1.5"/><rect x="591.75" y="216.75" width="1.5" height="1.5"/><rect x="599.25" y="216.75" width="1.5" height="1.5"/><rect x="606.75" y="216.75" width="1.5" height="1.5"/><rect x="614.25" y="216.75" width="1.5" height="1.5"/><rect x="621.75" y="216.75" width="1.5" height="1.5"/><rect x="629.25" y="216.75" width="1.5" height="1.5"/><rect x="366.75" y="224.25" width="1.5" height="1.5"/><rect x="374.25" y="224.25" width="1.5" height="1.5"/><rect x="381.75" y="224.25" width="1.5" height="1.5"/><rect x="389.25" y="224.25" width="1.5" height="1.5"/><rect x="396.75" y="224.25" width="1.5" height="1.5"/><rect x="404.25" y="224.25" width="1.5" height="1.5"/><rect x="411.75" y="224.25" width="1.5" height="1.5"/><rect x="419.25" y="224.25" width="1.5" height="1.5"/><rect x="426.75" y="224.25" width="1.5" height="1.5"/><rect x="434.25" y="224.25" width="1.5" height="1.5"/><rect x="441.75" y="224.25" width="1.5" height="1.5"/><rect x="449.25" y="224.25" width="1.5" height="1.5"/><rect x="456.75" y="224.25" width="1.5" height="1.5"/><rect x="464.25" y="224.25" width="1.5" height="1.5"/><rect x="471.75" y="224.25" width="1.5" height="1.5"/><rect x="479.25" y="224.25" width="1.5" height="1.5"/><rect x="486.75" y="224.25" width="1.5" height="1.5"/><rect x="494.25" y="224.25" width="1.5" height="1.5"/><rect x="501.75" y="224.25" width="1.5" height="1.5"/><rect x="509.25" y="224.25" width="1.5" height="1.5"/><rect x="516.75" y="224.25" width="1.5" height="1.5"/><rect x="524.25" y="224.25" width="1.5" height="1.5"/><rect x="531.75" y="224.25" width="1.5" height="1.5"/><rect x="539.25" y="224.25" width="1.5" height="1.5"/><rect x="546.75" y="224.25" width="1.5" height="1.5"/><rect x="554.25" y="224.25" width="1.5" height="1.5"/><rect x="561.75" y="224.25" width="1.5" height="1.5"/><rect x="569.25" y="224.25" width="1.5" height="1.5"/><rect x="576.75" y="224.25" width="1.5" height="1.5"/><rect x="584.25" y="224.25" width="1.5" height="1.5"/><rect x="591.75" y="224.25" width="1.5" height="1.5"/><rect x="599.25" y="224.25" width="1.5" height="1.5"/><rect x="606.75" y="224.25" width="1.5" height="1.5"/><rect x="614.25" y="224.25" width="1.5" height="1.5"/><rect x="621.75" y="224.25" width="1.5" height="1.5"/><rect x="629.25" y="224.25" width="1.5" height="1.5"/><rect x="366.75" y="231.75" width="1.5" height="1.5"/><rect x="374.25" y="231.75" width="1.5" height="1.5"/><rect x="381.75" y="231.75" width="1.5" height="1.5"/><rect x="389.25" y="231.75" width="1.5" height="1.5"/><rect x="396.75" y="231.75" width="1.5" height="1.5"/><rect x="404.25" y="231.75" width="1.5" height="1.5"/><rect x="411.75" y="231.75" width="1.5" height="1.5"/><rect x="419.25" y="231.75" width="1.5" height="1.5"/><rect x="426.75" y="231.75" width="1.5" height="1.5"/><rect x="434.25" y="231.75" width="1.5" height="1.5"/><rect x="441.75" y="231.75" width="1.5" height="1.5"/><rect x="449.25" y="231.75" width="1.5" height="1.5"/><rect x="456.75" y="231.75" width="1.5" height="1.5"/><rect x="464.25" y="231.75" width="1.5" height="1.5"/><rect x="471.75" y="231.75" width="1.5" height="1.5"/><rect x="479.25" y="231.75" width="1.5" height="1.5"/><rect x="486.75" y="231.75" width="1.5" height="1.5"/><rect x="494.25" y="231.75" width="1.5" height="1.5"/><rect x="501.75" y="231.75" width="1.5" height="1.5"/><rect x="509.25" y="231.75" width="1.5" height="1.5"/><rect x="516.75" y="231.75" width="1.5" height="1.5"/><rect x="524.25" y="231.75" width="1.5" height="1.5"/><rect x="531.75" y="231.75" width="1.5" height="1.5"/><rect x="539.25" y="231.75" width="1.5" height="1.5"/><rect x="546.75" y="231.75" width="1.5" height="1.5"/><rect x="554.25" y="231.75" width="1.5" height="1.5"/><rect x="561.75" y="231.75" width="1.5" height="1.5"/><rect x="569.25" y="231.75" width="1.5" height="1.5"/><rect x="576.75" y="231.75" width="1.5" height="1.5"/><rect x="584.25" y="231.75" width="1.5" height="1.5"/><rect x="591.75" y="231.75" width="1.5" height="1.5"/><rect x="599.25" y="231.75" width="1.5" height="1.5"/><rect x="606.75" y="231.75" width="1.5" height="1.5"/><rect x="614.25" y="231.75" width="1.5" height="1.5"/><rect x="621.75" y="231.75" width="1.5" height="1.5"/><rect x="629.25" y="231.75" width="1.5" height="1.5"/><rect x="366.75" y="239.25" width="1.5" height="1.5"/><rect x="374.25" y="239.25" width="1.5" height="1.5"/><rect x="381.75" y="239.25" width="1.5" height="1.5"/><rect x="389.25" y="239.25" width="1.5" height="1.5"/><rect x="396.75" y="239.25" width="1.5" height="1.5"/><rect x="404.25" y="239.25" width="1.5" height="1.5"/><rect x="411.75" y="239.25" width="1.5" height="1.5"/><rect x="419.25" y="239.25" width="1.5" height="1.5"/><rect x="426.75" y="239.25" width="1.5" height="1.5"/><rect x="434.25" y="239.25" width="1.5" height="1.5"/><rect x="441.75" y="239.25" width="1.5" height="1.5"/><rect x="449.25" y="239.25" width="1.5" height="1.5"/><rect x="456.75" y="239.25" width="1.5" height="1.5"/><rect x="464.25" y="239.25" width="1.5" height="1.5"/><rect x="471.75" y="239.25" width="1.5" height="1.5"/><rect x="479.25" y="239.25" width="1.5" height="1.5"/><rect x="486.75" y="239.25" width="1.5" height="1.5"/><rect x="494.25" y="239.25" width="1.5" height="1.5"/><rect x="501.75" y="239.25" width="1.5" height="1.5"/><rect x="509.25" y="239.25" width="1.5" height="1.5"/><rect x="516.75" y="239.25" width="1.5" height="1.5"/><rect x="524.25" y="239.25" width="1.5" height="1.5"/><rect x="531.75" y="239.25" width="1.5" height="1.5"/><rect x="539.25" y="239.25" width="1.5" height="1.5"/><rect x="546.75" y="239.25" width="1.5" height="1.5"/><rect x="554.25" y="239.25" width="1.5" height="1.5"/><rect x="561.75" y="239.25" width="1.5" height="1.5"/><rect x="569.25" y="239.25" width="1.5" height="1.5"/><rect x="576.75" y="239.25" width="1.5" height="1.5"/><rect x="584.25" y="239.25" width="1.5" height="1.5"/><rect x="591.75" y="239.25" width="1.5" height="1.5"/><rect x="599.25" y="239.25" width="1.5" height="1.5"/><rect x="606.75" y="239.25" width="1.5" height="1.5"/><rect x="614.25" y="239.25" width="1.5" height="1.5"/><rect x="621.75" y="239.25" width="1.5" height="1.5"/><rect x="629.25" y="239.25" width="1.5" height="1.5"/><rect x="366.75" y="246.75" width="1.5" height="1.5"/><rect x="374.25" y="246.75" width="1.5" height="1.5"/><rect x="381.75" y="246.75" width="1.5" height="1.5"/><rect x="389.25" y="246.75" width="1.5" height="1.5"/><rect x="396.75" y="246.75" width="1.5" height="1.5"/><rect x="404.25" y="246.75" width="1.5" height="1.5"/><rect x="411.75" y="246.75" width="1.5" height="1.5"/><rect x="419.25" y="246.75" width="1.5" height="1.5"/><rect x="426.75" y="246.75" width="1.5" height="1.5"/><rect x="434.25" y="246.75" width="1.5" height="1.5"/><rect x="441.75" y="246.75" width="1.5" height="1.5"/><rect x="449.25" y="246.75" width="1.5" height="1.5"/><rect x="456.75" y="246.75" width="1.5" height="1.5"/><rect x="464.25" y="246.75" width="1.5" height="1.5"/><rect x="471.75" y="246.75" width="1.5" height="1.5"/><rect x="479.25" y="246.75" width="1.5" height="1.5"/><rect x="486.75" y="246.75" width="1.5" height="1.5"/><rect x="494.25" y="246.75" width="1.5" height="1.5"/><rect x="501.75" y="246.75" width="1.5" height="1.5"/><rect x="509.25" y="246.75" width="1.5" height="1.5"/><rect x="516.75" y="246.75" width="1.5" height="1.5"/><rect x="524.25" y="246.75" width="1.5" height="1.5"/><rect x="531.75" y="246.75" width="1.5" height="1.5"/><rect x="539.25" y="246.75" width="1.5" height="1.5"/><rect x="546.75" y="246.75" width="1.5" height="1.5"/><rect x="554.25" y="246.75" width="1.5" height="1.5"/><rect x="561.75" y="246.75" width="1.5" height="1.5"/><rect x="569.25" y="246.75" width="1.5" height="1.5"/><rect x="576.75" y="246.75" width="1.5" height="1.5"/><rect x="584.25" y="246.75" width="1.5" height="1.5"/><rect x="591.75" y="246.75" width="1.5" height="1.5"/><rect x="599.25" y="246.75" width="1.5" height="1.5"/><rect x="606.75" y="246.75" width="1.5" height="1.5"/><rect x="614.25" y="246.75" width="1.5" height="1.5"/><rect x="621.75" y="246.75" width="1.5" height="1.5"/><rect x="629.25" y="246.75" width="1.5" height="1.5"/><rect x="366.75" y="254.25" width="1.5" height="1.5"/><rect x="374.25" y="254.25" width="1.5" height="1.5"/><rect x="381.75" y="254.25" width="1.5" height="1.5"/><rect x="389.25" y="254.25" width="1.5" height="1.5"/><rect x="396.75" y="254.25" width="1.5" height="1.5"/><rect x="404.25" y="254.25" width="1.5" height="1.5"/><rect x="411.75" y="254.25" width="1.5" height="1.5"/><rect x="419.25" y="254.25" width="1.5" height="1.5"/><rect x="426.75" y="254.25" width="1.5" height="1.5"/><rect x="434.25" y="254.25" width="1.5" height="1.5"/><rect x="441.75" y="254.25" width="1.5" height="1.5"/><rect x="449.25" y="254.25" width="1.5" height="1.5"/><rect x="456.75" y="254.25" width="1.5" height="1.5"/><rect x="464.25" y="254.25" width="1.5" height="1.5"/><rect x="471.75" y="254.25" width="1.5" height="1.5"/><rect x="479.25" y="254.25" width="1.5" height="1.5"/><rect x="486.75" y="254.25" width="1.5" height="1.5"/><rect x="494.25" y="254.25" width="1.5" height="1.5"/><rect x="501.75" y="254.25" width="1.5" height="1.5"/><rect x="509.25" y="254.25" width="1.5" height="1.5"/><rect x="516.75" y="254.25" width="1.5" height="1.5"/><rect x="524.25" y="254.25" width="1.5" height="1.5"/><rect x="531.75" y="254.25" width="1.5" height="1.5"/><rect x="539.25" y="254.25" width="1.5" height="1.5"/><rect x="546.75" y="254.25" width="1.5" height="1.5"/><rect x="554.25" y="254.25" width="1.5" height="1.5"/><rect x="561.75" y="254.25" width="1.5" height="1.5"/><rect x="569.25" y="254.25" width="1.5" height="1.5"/><rect x="576.75" y="254.25" width="1.5" height="1.5"/><rect x="584.25" y="254.25" width="1.5" height="1.5"/><rect x="591.75" y="254.25" width="1.5" height="1.5"/><rect x="599.25" y="254.25" width="1.5" height="1.5"/><rect x="606.75" y="254.25" width="1.5" height="1.5"/><rect x="614.25" y="254.25" width="1.5" height="1.5"/><rect x="621.75" y="254.25" width="1.5" height="1.5"/><rect x="629.25" y="254.25" width="1.5" height="1.5"/><rect x="366.75" y="261.75" width="1.5" height="1.5"/><rect x="374.25" y="261.75" width="1.5" height="1.5"/><rect x="381.75" y="261.75" width="1.5" height="1.5"/><rect x="389.25" y="261.75" width="1.5" height="1.5"/><rect x="396.75" y="261.75" width="1.5" height="1.5"/><rect x="404.25" y="261.75" width="1.5" height="1.5"/><rect x="411.75" y="261.75" width="1.5" height="1.5"/><rect x="419.25" y="261.75" width="1.5" height="1.5"/><rect x="426.75" y="261.75" width="1.5" height="1.5"/><rect x="434.25" y="261.75" width="1.5" height="1.5"/><rect x="441.75" y="261.75" width="1.5" height="1.5"/><rect x="449.25" y="261.75" width="1.5" height="1.5"/><rect x="456.75" y="261.75" width="1.5" height="1.5"/><rect x="464.25" y="261.75" width="1.5" height="1.5"/><rect x="471.75" y="261.75" width="1.5" height="1.5"/><rect x="479.25" y="261.75" width="1.5" height="1.5"/><rect x="486.75" y="261.75" width="1.5" height="1.5"/><rect x="494.25" y="261.75" width="1.5" height="1.5"/><rect x="501.75" y="261.75" width="1.5" height="1.5"/><rect x="509.25" y="261.75" width="1.5" height="1.5"/><rect x="516.75" y="261.75" width="1.5" height="1.5"/><rect x="524.25" y="261.75" width="1.5" height="1.5"/><rect x="531.75" y="261.75" width="1.5" height="1.5"/><rect x="539.25" y="261.75" width="1.5" height="1.5"/><rect x="546.75" y="261.75" width="1.5" height="1.5"/><rect x="554.25" y="261.75" width="1.5" height="1.5"/><rect x="561.75" y="261.75" width="1.5" height="1.5"/><rect x="569.25" y="261.75" width="1.5" height="1.5"/><rect x="576.75" y="261.75" width="1.5" height="1.5"/><rect x="584.25" y="261.75" width="1.5" height="1.5"/><rect x="591.75" y="261.75" width="1.5" height="1.5"/><rect x="599.25" y="261.75" width="1.5" height="1.5"/><rect x="606.75" y="261.75" width="1.5" height="1.5"/><rect x="614.25" y="261.75" width="1.5" height="1.5"/><rect x="621.75" y="261.75" width="1.5" height="1.5"/><rect x="629.25" y="261.75" width="1.5" height="1.5"/><rect x="366.75" y="269.25" width="1.5" height="1.5"/><rect x="374.25" y="269.25" width="1.5" height="1.5"/><rect x="381.75" y="269.25" width="1.5" height="1.5"/><rect x="389.25" y="269.25" width="1.5" height="1.5"/><rect x="396.75" y="269.25" width="1.5" height="1.5"/><rect x="404.25" y="269.25" width="1.5" height="1.5"/><rect x="411.75" y="269.25" width="1.5" height="1.5"/><rect x="419.25" y="269.25" width="1.5" height="1.5"/><rect x="426.75" y="269.25" width="1.5" height="1.5"/><rect x="434.25" y="269.25" width="1.5" height="1.5"/><rect x="441.75" y="269.25" width="1.5" height="1.5"/><rect x="449.25" y="269.25" width="1.5" height="1.5"/><rect x="456.75" y="269.25" width="1.5" height="1.5"/><rect x="464.25" y="269.25" width="1.5" height="1.5"/><rect x="471.75" y="269.25" width="1.5" height="1.5"/><rect x="479.25" y="269.25" width="1.5" height="1.5"/><rect x="486.75" y="269.25" width="1.5" height="1.5"/><rect x="494.25" y="269.25" width="1.5" height="1.5"/><rect x="501.75" y="269.25" width="1.5" height="1.5"/><rect x="509.25" y="269.25" width="1.5" height="1.5"/><rect x="516.75" y="269.25" width="1.5" height="1.5"/><rect x="524.25" y="269.25" width="1.5" height="1.5"/><rect x="531.75" y="269.25" width="1.5" height="1.5"/><rect x="539.25" y="269.25" width="1.5" height="1.5"/><rect x="546.75" y="269.25" width="1.5" height="1.5"/><rect x="554.25" y="269.25" width="1.5" height="1.5"/><rect x="561.75" y="269.25" width="1.5" height="1.5"/><rect x="569.25" y="269.25" width="1.5" height="1.5"/><rect x="576.75" y="269.25" width="1.5" height="1.5"/><rect x="584.25" y="269.25" width="1.5" height="1.5"/><rect x="591.75" y="269.25" width="1.5" height="1.5"/><rect x="599.25" y="269.25" width="1.5" height="1.5"/><rect x="606.75" y="269.25" width="1.5" height="1.5"/><rect x="614.25" y="269.25" width="1.5" height="1.5"/><rect x="621.75" y="269.25" width="1.5" height="1.5"/><rect x="629.25" y="269.25" width="1.5" height="1.5"/><rect x="366.75" y="276.75" width="1.5" height="1.5"/><rect x="374.25" y="276.75" width="1.5" height="1.5"/><rect x="381.75" y="276.75" width="1.5" height="1.5"/><rect x="389.25" y="276.75" width="1.5" height="1.5"/><rect x="396.75" y="276.75" width="1.5" height="1.5"/><rect x="404.25" y="276.75" width="1.5" height="1.5"/><rect x="411.75" y="276.75" width="1.5" height="1.5"/><rect x="419.25" y="276.75" width="1.5" height="1.5"/><rect x="426.75" y="276.75" width="1.5" height="1.5"/><rect x="434.25" y="276.75" width="1.5" height="1.5"/><rect x="441.75" y="276.75" width="1.5" height="1.5"/><rect x="449.25" y="276.75" width="1.5" height="1.5"/><rect x="456.75" y="276.75" width="1.5" height="1.5"/><rect x="464.25" y="276.75" width="1.5" height="1.5"/><rect x="471.75" y="276.75" width="1.5" height="1.5"/><rect x="479.25" y="276.75" width="1.5" height="1.5"/><rect x="486.75" y="276.75" width="1.5" height="1.5"/><rect x="494.25" y="276.75" width="1.5" height="1.5"/><rect x="501.75" y="276.75" width="1.5" height="1.5"/><rect x="509.25" y="276.75" width="1.5" height="1.5"/><rect x="516.75" y="276.75" width="1.5" height="1.5"/><rect x="524.25" y="276.75" width="1.5" height="1.5"/><rect x="531.75" y="276.75" width="1.5" height="1.5"/><rect x="539.25" y="276.75" width="1.5" height="1.5"/><rect x="546.75" y="276.75" width="1.5" height="1.5"/><rect x="554.25" y="276.75" width="1.5" height="1.5"/><rect x="561.75" y="276.75" width="1.5" height="1.5"/><rect x="569.25" y="276.75" width="1.5" height="1.5"/><rect x="576.75" y="276.75" width="1.5" height="1.5"/><rect x="584.25" y="276.75" width="1.5" height="1.5"/><rect x="591.75" y="276.75" width="1.5" height="1.5"/><rect x="599.25" y="276.75" width="1.5" height="1.5"/><rect x="606.75" y="276.75" width="1.5" height="1.5"/><rect x="614.25" y="276.75" width="1.5" height="1.5"/><rect x="621.75" y="276.75" width="1.5" height="1.5"/><rect x="629.25" y="276.75" width="1.5" height="1.5"/><rect x="366.75" y="284.25" width="1.5" height="1.5"/><rect x="374.25" y="284.25" width="1.5" height="1.5"/><rect x="381.75" y="284.25" width="1.5" height="1.5"/><rect x="389.25" y="284.25" width="1.5" height="1.5"/><rect x="396.75" y="284.25" width="1.5" height="1.5"/><rect x="404.25" y="284.25" width="1.5" height="1.5"/><rect x="411.75" y="284.25" width="1.5" height="1.5"/><rect x="419.25" y="284.25" width="1.5" height="1.5"/><rect x="426.75" y="284.25" width="1.5" height="1.5"/><rect x="434.25" y="284.25" width="1.5" height="1.5"/><rect x="441.75" y="284.25" width="1.5" height="1.5"/><rect x="449.25" y="284.25" width="1.5" height="1.5"/><rect x="456.75" y="284.25" width="1.5" height="1.5"/><rect x="464.25" y="284.25" width="1.5" height="1.5"/><rect x="471.75" y="284.25" width="1.5" height="1.5"/><rect x="479.25" y="284.25" width="1.5" height="1.5"/><rect x="486.75" y="284.25" width="1.5" height="1.5"/><rect x="494.25" y="284.25" width="1.5" height="1.5"/><rect x="501.75" y="284.25" width="1.5" height="1.5"/><rect x="509.25" y="284.25" width="1.5" height="1.5"/><rect x="516.75" y="284.25" width="1.5" height="1.5"/><rect x="524.25" y="284.25" width="1.5" height="1.5"/><rect x="531.75" y="284.25" width="1.5" height="1.5"/><rect x="539.25" y="284.25" width="1.5" height="1.5"/><rect x="546.75" y="284.25" width="1.5" height="1.5"/><rect x="554.25" y="284.25" width="1.5" height="1.5"/><rect x="561.75" y="284.25" width="1.5" height="1.5"/><rect x="569.25" y="284.25" width="1.5" height="1.5"/><rect x="576.75" y="284.25" width="1.5" height="1.5"/><rect x="584.25" y="284.25" width="1.5" height="1.5"/><rect x="591.75" y="284.25" width="1.5" height="1.5"/><rect x="599.25" y="284.25" width="1.5" height="1.5"/><rect x="606.75" y="284.25" width="1.5" height="1.5"/><rect x="614.25" y="284.25" width="1.5" height="1.5"/><rect x="621.75" y="284.25" width="1.5" height="1.5"/><rect x="629.25" y="284.25" width="1.5" height="1.5"/><rect x="366.75" y="291.75" width="1.5" height="1.5"/><rect x="374.25" y="291.75" width="1.5" height="1.5"/><rect x="381.75" y="291.75" width="1.5" height="1.5"/><rect x="389.25" y="291.75" width="1.5" height="1.5"/><rect x="396.75" y="291.75" width="1.5" height="1.5"/><rect x="404.25" y="291.75" width="1.5" height="1.5"/><rect x="411.75" y="291.75" width="1.5" height="1.5"/><rect x="419.25" y="291.75" width="1.5" height="1.5"/><rect x="426.75" y="291.75" width="1.5" height="1.5"/><rect x="434.25" y="291.75" width="1.5" height="1.5"/><rect x="441.75" y="291.75" width="1.5" height="1.5"/><rect x="449.25" y="291.75" width="1.5" height="1.5"/><rect x="456.75" y="291.75" width="1.5" height="1.5"/><rect x="464.25" y="291.75" width="1.5" height="1.5"/><rect x="471.75" y="291.75" width="1.5" height="1.5"/><rect x="479.25" y="291.75" width="1.5" height="1.5"/><rect x="486.75" y="291.75" width="1.5" height="1.5"/><rect x="494.25" y="291.75" width="1.5" height="1.5"/><rect x="501.75" y="291.75" width="1.5" height="1.5"/><rect x="509.25" y="291.75" width="1.5" height="1.5"/><rect x="516.75" y="291.75" width="1.5" height="1.5"/><rect x="524.25" y="291.75" width="1.5" height="1.5"/><rect x="531.75" y="291.75" width="1.5" height="1.5"/><rect x="539.25" y="291.75" width="1.5" height="1.5"/><rect x="546.75" y="291.75" width="1.5" height="1.5"/><rect x="554.25" y="291.75" width="1.5" height="1.5"/><rect x="561.75" y="291.75" width="1.5" height="1.5"/><rect x="569.25" y="291.75" width="1.5" height="1.5"/><rect x="576.75" y="291.75" width="1.5" height="1.5"/><rect x="584.25" y="291.75" width="1.5" height="1.5"/><rect x="591.75" y="291.75" width="1.5" height="1.5"/><rect x="599.25" y="291.75" width="1.5" height="1.5"/><rect x="606.75" y="291.75" width="1.5" height="1.5"/><rect x="614.25" y="291.75" width="1.5" height="1.5"/><rect x="621.75" y="291.75" width="1.5" height="1.5"/><rect x="629.25" y="291.75" width="1.5" height="1.5"/><rect x="366.75" y="299.25" width="1.5" height="1.5"/><rect x="374.25" y="299.25" width="1.5" height="1.5"/><rect x="381.75" y="299.25" width="1.5" height="1.5"/><rect x="389.25" y="299.25" width="1.5" height="1.5"/><rect x="396.75" y="299.25" width="1.5" height="1.5"/><rect x="404.25" y="299.25" width="1.5" height="1.5"/><rect x="411.75" y="299.25" width="1.5" height="1.5"/><rect x="419.25" y="299.25" width="1.5" height="1.5"/><rect x="426.75" y="299.25" width="1.5" height="1.5"/><rect x="434.25" y="299.25" width="1.5" height="1.5"/><rect x="441.75" y="299.25" width="1.5" height="1.5"/><rect x="449.25" y="299.25" width="1.5" height="1.5"/><rect x="456.75" y="299.25" width="1.5" height="1.5"/><rect x="464.25" y="299.25" width="1.5" height="1.5"/><rect x="471.75" y="299.25" width="1.5" height="1.5"/><rect x="479.25" y="299.25" width="1.5" height="1.5"/><rect x="486.75" y="299.25" width="1.5" height="1.5"/><rect x="494.25" y="299.25" width="1.5" height="1.5"/><rect x="501.75" y="299.25" width="1.5" height="1.5"/><rect x="509.25" y="299.25" width="1.5" height="1.5"/><rect x="516.75" y="299.25" width="1.5" height="1.5"/><rect x="524.25" y="299.25" width="1.5" height="1.5"/><rect x="531.75" y="299.25" width="1.5" height="1.5"/><rect x="539.25" y="299.25" width="1.5" height="1.5"/><rect x="546.75" y="299.25" width="1.5" height="1.5"/><rect x="554.25" y="299.25" width="1.5" height="1.5"/><rect x="561.75" y="299.25" width="1.5" height="1.5"/><rect x="569.25" y="299.25" width="1.5" height="1.5"/><rect x="576.75" y="299.25" width="1.5" height="1.5"/><rect x="584.25" y="299.25" width="1.5" height="1.5"/><rect x="591.75" y="299.25" width="1.5" height="1.5"/><rect x="599.25" y="299.25" width="1.5" height="1.5"/><rect x="606.75" y="299.25" width="1.5" height="1.5"/><rect x="614.25" y="299.25" width="1.5" height="1.5"/><rect x="621.75" y="299.25" width="1.5" height="1.5"/><rect x="629.25" y="299.25" width="1.5" height="1.5"/><rect x="366.75" y="306.75" width="1.5" height="1.5"/><rect x="374.25" y="306.75" width="1.5" height="1.5"/><rect x="381.75" y="306.75" width="1.5" height="1.5"/><rect x="389.25" y="306.75" width="1.5" height="1.5"/><rect x="396.75" y="306.75" width="1.5" height="1.5"/><rect x="404.25" y="306.75" width="1.5" height="1.5"/><rect x="411.75" y="306.75" width="1.5" height="1.5"/><rect x="419.25" y="306.75" width="1.5" height="1.5"/><rect x="426.75" y="306.75" width="1.5" height="1.5"/><rect x="434.25" y="306.75" width="1.5" height="1.5"/><rect x="441.75" y="306.75" width="1.5" height="1.5"/><rect x="449.25" y="306.75" width="1.5" height="1.5"/><rect x="456.75" y="306.75" width="1.5" height="1.5"/><rect x="464.25" y="306.75" width="1.5" height="1.5"/><rect x="471.75" y="306.75" width="1.5" height="1.5"/><rect x="479.25" y="306.75" width="1.5" height="1.5"/><rect x="486.75" y="306.75" width="1.5" height="1.5"/><rect x="494.25" y="306.75" width="1.5" height="1.5"/><rect x="501.75" y="306.75" width="1.5" height="1.5"/><rect x="509.25" y="306.75" width="1.5" height="1.5"/><rect x="516.75" y="306.75" width="1.5" height="1.5"/><rect x="524.25" y="306.75" width="1.5" height="1.5"/><rect x="531.75" y="306.75" width="1.5" height="1.5"/><rect x="539.25" y="306.75" width="1.5" height="1.5"/><rect x="546.75" y="306.75" width="1.5" height="1.5"/><rect x="554.25" y="306.75" width="1.5" height="1.5"/><rect x="561.75" y="306.75" width="1.5" height="1.5"/><rect x="569.25" y="306.75" width="1.5" height="1.5"/><rect x="576.75" y="306.75" width="1.5" height="1.5"/><rect x="584.25" y="306.75" width="1.5" height="1.5"/><rect x="591.75" y="306.75" width="1.5" height="1.5"/><rect x="599.25" y="306.75" width="1.5" height="1.5"/><rect x="606.75" y="306.75" width="1.5" height="1.5"/><rect x="614.25" y="306.75" width="1.5" height="1.5"/><rect x="621.75" y="306.75" width="1.5" height="1.5"/><rect x="629.25" y="306.75" width="1.5" height="1.5"/><rect x="366.75" y="314.25" width="1.5" height="1.5"/><rect x="374.25" y="314.25" width="1.5" height="1.5"/><rect x="381.75" y="314.25" width="1.5" height="1.5"/><rect x="389.25" y="314.25" width="1.5" height="1.5"/><rect x="396.75" y="314.25" width="1.5" height="1.5"/><rect x="404.25" y="314.25" width="1.5" height="1.5"/><rect x="411.75" y="314.25" width="1.5" height="1.5"/><rect x="419.25" y="314.25" width="1.5" height="1.5"/><rect x="426.75" y="314.25" width="1.5" height="1.5"/><rect x="434.25" y="314.25" width="1.5" height="1.5"/><rect x="441.75" y="314.25" width="1.5" height="1.5"/><rect x="449.25" y="314.25" width="1.5" height="1.5"/><rect x="456.75" y="314.25" width="1.5" height="1.5"/><rect x="464.25" y="314.25" width="1.5" height="1.5"/><rect x="471.75" y="314.25" width="1.5" height="1.5"/><rect x="479.25" y="314.25" width="1.5" height="1.5"/><rect x="486.75" y="314.25" width="1.5" height="1.5"/><rect x="494.25" y="314.25" width="1.5" height="1.5"/><rect x="501.75" y="314.25" width="1.5" height="1.5"/><rect x="509.25" y="314.25" width="1.5" height="1.5"/><rect x="516.75" y="314.25" width="1.5" height="1.5"/><rect x="524.25" y="314.25" width="1.5" height="1.5"/><rect x="531.75" y="314.25" width="1.5" height="1.5"/><rect x="539.25" y="314.25" width="1.5" height="1.5"/><rect x="546.75" y="314.25" width="1.5" height="1.5"/><rect x="554.25" y="314.25" width="1.5" height="1.5"/><rect x="561.75" y="314.25" width="1.5" height="1.5"/><rect x="569.25" y="314.25" width="1.5" height="1.5"/><rect x="576.75" y="314.25" width="1.5" height="1.5"/><rect x="584.25" y="314.25" width="1.5" height="1.5"/><rect x="591.75" y="314.25" width="1.5" height="1.5"/><rect x="599.25" y="314.25" width="1.5" height="1.5"/><rect x="606.75" y="314.25" width="1.5" height="1.5"/><rect x="614.25" y="314.25" width="1.5" height="1.5"/><rect x="621.75" y="314.25" width="1.5" height="1.5"/><rect x="629.25" y="314.25" width="1.5" height="1.5"/><rect x="366.75" y="321.75" width="1.5" height="1.5"/><rect x="374.25" y="321.75" width="1.5" height="1.5"/><rect x="381.75" y="321.75" width="1.5" height="1.5"/><rect x="389.25" y="321.75" width="1.5" height="1.5"/><rect x="396.75" y="321.75" width="1.5" height="1.5"/><rect x="404.25" y="321.75" width="1.5" height="1.5"/><rect x="411.75" y="321.75" width="1.5" height="1.5"/><rect x="419.25" y="321.75" width="1.5" height="1.5"/><rect x="426.75" y="321.75" width="1.5" height="1.5"/><rect x="434.25" y="321.75" width="1.5" height="1.5"/><rect x="441.75" y="321.75" width="1.5" height="1.5"/><rect x="449.25" y="321.75" width="1.5" height="1.5"/><rect x="456.75" y="321.75" width="1.5" height="1.5"/><rect x="464.25" y="321.75" width="1.5" height="1.5"/><rect x="471.75" y="321.75" width="1.5" height="1.5"/><rect x="479.25" y="321.75" width="1.5" height="1.5"/><rect x="486.75" y="321.75" width="1.5" height="1.5"/><rect x="494.25" y="321.75" width="1.5" height="1.5"/><rect x="501.75" y="321.75" width="1.5" height="1.5"/><rect x="509.25" y="321.75" width="1.5" height="1.5"/><rect x="516.75" y="321.75" width="1.5" height="1.5"/><rect x="524.25" y="321.75" width="1.5" height="1.5"/><rect x="531.75" y="321.75" width="1.5" height="1.5"/><rect x="539.25" y="321.75" width="1.5" height="1.5"/><rect x="546.75" y="321.75" width="1.5" height="1.5"/><rect x="554.25" y="321.75" width="1.5" height="1.5"/><rect x="561.75" y="321.75" width="1.5" height="1.5"/><rect x="569.25" y="321.75" width="1.5" height="1.5"/><rect x="576.75" y="321.75" width="1.5" height="1.5"/><rect x="584.25" y="321.75" width="1.5" height="1.5"/><rect x="591.75" y="321.75" width="1.5" height="1.5"/><rect x="599.25" y="321.75" width="1.5" height="1.5"/><rect x="606.75" y="321.75" width="1.5" height="1.5"/><rect x="614.25" y="321.75" width="1.5" height="1.5"/><rect x="621.75" y="321.75" width="1.5" height="1.5"/><rect x="629.25" y="321.75" width="1.5" height="1.5"/><rect x="366.75" y="329.25" width="1.5" height="1.5"/><rect x="374.25" y="329.25" width="1.5" height="1.5"/><rect x="381.75" y="329.25" width="1.5" height="1.5"/><rect x="389.25" y="329.25" width="1.5" height="1.5"/><rect x="396.75" y="329.25" width="1.5" height="1.5"/><rect x="404.25" y="329.25" width="1.5" height="1.5"/><rect x="411.75" y="329.25" width="1.5" height="1.5"/><rect x="419.25" y="329.25" width="1.5" height="1.5"/><rect x="426.75" y="329.25" width="1.5" height="1.5"/><rect x="434.25" y="329.25" width="1.5" height="1.5"/><rect x="441.75" y="329.25" width="1.5" height="1.5"/><rect x="449.25" y="329.25" width="1.5" height="1.5"/><rect x="456.75" y="329.25" width="1.5" height="1.5"/><rect x="464.25" y="329.25" width="1.5" height="1.5"/><rect x="471.75" y="329.25" width="1.5" height="1.5"/><rect x="479.25" y="329.25" width="1.5" height="1.5"/><rect x="486.75" y="329.25" width="1.5" height="1.5"/><rect x="494.25" y="329.25" width="1.5" height="1.5"/><rect x="501.75" y="329.25" width="1.5" height="1.5"/><rect x="509.25" y="329.25" width="1.5" height="1.5"/><rect x="516.75" y="329.25" width="1.5" height="1.5"/><rect x="524.25" y="329.25" width="1.5" height="1.5"/><rect x="531.75" y="329.25" width="1.5" height="1.5"/><rect x="539.25" y="329.25" width="1.5" height="1.5"/><rect x="546.75" y="329.25" width="1.5" height="1.5"/><rect x="554.25" y="329.25" width="1.5" height="1.5"/><rect x="561.75" y="329.25" width="1.5" height="1.5"/><rect x="569.25" y="329.25" width="1.5" height="1.5"/><rect x="576.75" y="329.25" width="1.5" height="1.5"/><rect x="584.25" y="329.25" width="1.5" height="1.5"/><rect x="591.75" y="329.25" width="1.5" height="1.5"/><rect x="599.25" y="329.25" width="1.5" height="1.5"/><rect x="606.75" y="329.25" width="1.5" height="1.5"/><rect x="614.25" y="329.25" width="1.5" height="1.5"/><rect x="621.75" y="329.25" width="1.5" height="1.5"/><rect x="629.25" y="329.25" width="1.5" height="1.5"/><rect x="366.75" y="336.75" width="1.5" height="1.5"/><rect x="374.25" y="336.75" width="1.5" height="1.5"/><rect x="381.75" y="336.75" width="1.5" height="1.5"/><rect x="389.25" y="336.75" width="1.5" height="1.5"/><rect x="396.75" y="336.75" width="1.5" height="1.5"/><rect x="404.25" y="336.75" width="1.5" height="1.5"/><rect x="411.75" y="336.75" width="1.5" height="1.5"/><rect x="419.25" y="336.75" width="1.5" height="1.5"/><rect x="426.75" y="336.75" width="1.5" height="1.5"/><rect x="434.25" y="336.75" width="1.5" height="1.5"/><rect x="441.75" y="336.75" width="1.5" height="1.5"/><rect x="449.25" y="336.75" width="1.5" height="1.5"/><rect x="456.75" y="336.75" width="1.5" height="1.5"/><rect x="464.25" y="336.75" width="1.5" height="1.5"/><rect x="471.75" y="336.75" width="1.5" height="1.5"/><rect x="479.25" y="336.75" width="1.5" height="1.5"/><rect x="486.75" y="336.75" width="1.5" height="1.5"/><rect x="494.25" y="336.75" width="1.5" height="1.5"/><rect x="501.75" y="336.75" width="1.5" height="1.5"/><rect x="509.25" y="336.75" width="1.5" height="1.5"/><rect x="516.75" y="336.75" width="1.5" height="1.5"/><rect x="524.25" y="336.75" width="1.5" height="1.5"/><rect x="531.75" y="336.75" width="1.5" height="1.5"/><rect x="539.25" y="336.75" width="1.5" height="1.5"/><rect x="546.75" y="336.75" width="1.5" height="1.5"/><rect x="554.25" y="336.75" width="1.5" height="1.5"/><rect x="561.75" y="336.75" width="1.5" height="1.5"/><rect x="569.25" y="336.75" width="1.5" height="1.5"/><rect x="576.75" y="336.75" width="1.5" height="1.5"/><rect x="584.25" y="336.75" width="1.5" height="1.5"/><rect x="591.75" y="336.75" width="1.5" height="1.5"/><rect x="599.25" y="336.75" width="1.5" height="1.5"/><rect x="606.75" y="336.75" width="1.5" height="1.5"/><rect x="614.25" y="336.75" width="1.5" height="1.5"/><rect x="621.75" y="336.75" width="1.5" height="1.5"/><rect x="629.25" y="336.75" width="1.5" height="1.5"/><rect x="366.75" y="344.25" width="1.5" height="1.5"/><rect x="374.25" y="344.25" width="1.5" height="1.5"/><rect x="381.75" y="344.25" width="1.5" height="1.5"/><rect x="389.25" y="344.25" width="1.5" height="1.5"/><rect x="396.75" y="344.25" width="1.5" height="1.5"/><rect x="404.25" y="344.25" width="1.5" height="1.5"/><rect x="411.75" y="344.25" width="1.5" height="1.5"/><rect x="419.25" y="344.25" width="1.5" height="1.5"/><rect x="426.75" y="344.25" width="1.5" height="1.5"/><rect x="434.25" y="344.25" width="1.5" height="1.5"/><rect x="441.75" y="344.25" width="1.5" height="1.5"/><rect x="449.25" y="344.25" width="1.5" height="1.5"/><rect x="456.75" y="344.25" width="1.5" height="1.5"/><rect x="464.25" y="344.25" width="1.5" height="1.5"/><rect x="471.75" y="344.25" width="1.5" height="1.5"/><rect x="479.25" y="344.25" width="1.5" height="1.5"/><rect x="486.75" y="344.25" width="1.5" height="1.5"/><rect x="494.25" y="344.25" width="1.5" height="1.5"/><rect x="501.75" y="344.25" width="1.5" height="1.5"/><rect x="509.25" y="344.25" width="1.5" height="1.5"/><rect x="516.75" y="344.25" width="1.5" height="1.5"/><rect x="524.25" y="344.25" width="1.5" height="1.5"/><rect x="531.75" y="344.25" width="1.5" height="1.5"/><rect x="539.25" y="344.25" width="1.5" height="1.5"/><rect x="546.75" y="344.25" width="1.5" height="1.5"/><rect x="554.25" y="344.25" width="1.5" height="1.5"/><rect x="561.75" y="344.25" width="1.5" height="1.5"/><rect x="569.25" y="344.25" width="1.5" height="1.5"/><rect x="576.75" y="344.25" width="1.5" height="1.5"/><rect x="584.25" y="344.25" width="1.5" height="1.5"/><rect x="591.75" y="344.25" width="1.5" height="1.5"/><rect x="599.25" y="344.25" width="1.5" height="1.5"/><rect x="606.75" y="344.25" width="1.5" height="1.5"/><rect x="614.25" y="344.25" width="1.5" height="1.5"/><rect x="621.75" y="344.25" width="1.5" height="1.5"/><rect x="629.25" y="344.25" width="1.5" height="1.5"/><rect x="366.75" y="351.75" width="1.5" height="1.5"/><rect x="374.25" y="351.75" width="1.5" height="1.5"/><rect x="381.75" y="351.75" width="1.5" height="1.5"/><rect x="389.25" y="351.75" width="1.5" height="1.5"/><rect x="396.75" y="351.75" width="1.5" height="1.5"/><rect x="404.25" y="351.75" width="1.5" height="1.5"/><rect x="411.75" y="351.75" width="1.5" height="1.5"/><rect x="419.25" y="351.75" width="1.5" height="1.5"/><rect x="426.75" y="351.75" width="1.5" height="1.5"/><rect x="434.25" y="351.75" width="1.5" height="1.5"/><rect x="441.75" y="351.75" width="1.5" height="1.5"/><rect x="449.25" y="351.75" width="1.5" height="1.5"/><rect x="456.75" y="351.75" width="1.5" height="1.5"/><rect x="464.25" y="351.75" width="1.5" height="1.5"/><rect x="471.75" y="351.75" width="1.5" height="1.5"/><rect x="479.25" y="351.75" width="1.5" height="1.5"/><rect x="486.75" y="351.75" width="1.5" height="1.5"/><rect x="494.25" y="351.75" width="1.5" height="1.5"/><rect x="501.75" y="351.75" width="1.5" height="1.5"/><rect x="509.25" y="351.75" width="1.5" height="1.5"/><rect x="516.75" y="351.75" width="1.5" height="1.5"/><rect x="524.25" y="351.75" width="1.5" height="1.5"/><rect x="531.75" y="351.75" width="1.5" height="1.5"/><rect x="539.25" y="351.75" width="1.5" height="1.5"/><rect x="546.75" y="351.75" width="1.5" height="1.5"/><rect x="554.25" y="351.75" width="1.5" height="1.5"/><rect x="561.75" y="351.75" width="1.5" height="1.5"/><rect x="569.25" y="351.75" width="1.5" height="1.5"/><rect x="576.75" y="351.75" width="1.5" height="1.5"/><rect x="584.25" y="351.75" width="1.5" height="1.5"/><rect x="591.75" y="351.75" width="1.5" height="1.5"/><rect x="599.25" y="351.75" width="1.5" height="1.5"/><rect x="606.75" y="351.75" width="1.5" height="1.5"/><rect x="614.25" y="351.75" width="1.5" height="1.5"/><rect x="621.75" y="351.75" width="1.5" height="1.5"/><rect x="629.25" y="351.75" width="1.5" height="1.5"/><rect x="366.75" y="359.25" width="1.5" height="1.5"/><rect x="374.25" y="359.25" width="1.5" height="1.5"/><rect x="381.75" y="359.25" width="1.5" height="1.5"/><rect x="389.25" y="359.25" width="1.5" height="1.5"/><rect x="396.75" y="359.25" width="1.5" height="1.5"/><rect x="404.25" y="359.25" width="1.5" height="1.5"/><rect x="411.75" y="359.25" width="1.5" height="1.5"/><rect x="419.25" y="359.25" width="1.5" height="1.5"/><rect x="426.75" y="359.25" width="1.5" height="1.5"/><rect x="434.25" y="359.25" width="1.5" height="1.5"/><rect x="441.75" y="359.25" width="1.5" height="1.5"/><rect x="449.25" y="359.25" width="1.5" height="1.5"/><rect x="456.75" y="359.25" width="1.5" height="1.5"/><rect x="464.25" y="359.25" width="1.5" height="1.5"/><rect x="471.75" y="359.25" width="1.5" height="1.5"/><rect x="479.25" y="359.25" width="1.5" height="1.5"/><rect x="486.75" y="359.25" width="1.5" height="1.5"/><rect x="494.25" y="359.25" width="1.5" height="1.5"/><rect x="501.75" y="359.25" width="1.5" height="1.5"/><rect x="509.25" y="359.25" width="1.5" height="1.5"/><rect x="516.75" y="359.25" width="1.5" height="1.5"/><rect x="524.25" y="359.25" width="1.5" height="1.5"/><rect x="531.75" y="359.25" width="1.5" height="1.5"/><rect x="539.25" y="359.25" width="1.5" height="1.5"/><rect x="546.75" y="359.25" width="1.5" height="1.5"/><rect x="554.25" y="359.25" width="1.5" height="1.5"/><rect x="561.75" y="359.25" width="1.5" height="1.5"/><rect x="569.25" y="359.25" width="1.5" height="1.5"/><rect x="576.75" y="359.25" width="1.5" height="1.5"/><rect x="584.25" y="359.25" width="1.5" height="1.5"/><rect x="591.75" y="359.25" width="1.5" height="1.5"/><rect x="599.25" y="359.25" width="1.5" height="1.5"/><rect x="606.75" y="359.25" width="1.5" height="1.5"/><rect x="614.25" y="359.25" width="1.5" height="1.5"/><rect x="621.75" y="359.25" width="1.5" height="1.5"/><rect x="629.25" y="359.25" width="1.5" height="1.5"/><rect x="366.75" y="366.75" width="1.5" height="1.5"/><rect x="374.25" y="366.75" width="1.5" height="1.5"/><rect x="381.75" y="366.75" width="1.5" height="1.5"/><rect x="389.25" y="366.75" width="1.5" height="1.5"/><rect x="396.75" y="366.75" width="1.5" height="1.5"/><rect x="404.25" y="366.75" width="1.5" height="1.5"/><rect x="411.75" y="366.75" width="1.5" height="1.5"/><rect x="419.25" y="366.75" width="1.5" height="1.5"/><rect x="426.75" y="366.75" width="1.5" height="1.5"/><rect x="434.25" y="366.75" width="1.5" height="1.5"/><rect x="441.75" y="366.75" width="1.5" height="1.5"/><rect x="449.25" y="366.75" width="1.5" height="1.5"/><rect x="456.75" y="366.75" width="1.5" height="1.5"/><rect x="464.25" y="366.75" width="1.5" height="1.5"/><rect x="471.75" y="366.75" width="1.5" height="1.5"/><rect x="479.25" y="366.75" width="1.5" height="1.5"/><rect x="486.75" y="366.75" width="1.5" height="1.5"/><rect x="494.25" y="366.75" width="1.5" height="1.5"/><rect x="501.75" y="366.75" width="1.5" height="1.5"/><rect x="509.25" y="366.75" width="1.5" height="1.5"/><rect x="516.75" y="366.75" width="1.5" height="1.5"/><rect x="524.25" y="366.75" width="1.5" height="1.5"/><rect x="531.75" y="366.75" width="1.5" height="1.5"/><rect x="539.25" y="366.75" width="1.5" height="1.5"/><rect x="546.75" y="366.75" width="1.5" height="1.5"/><rect x="554.25" y="366.75" width="1.5" height="1.5"/><rect x="561.75" y="366.75" width="1.5" height="1.5"/><rect x="569.25" y="366.75" width="1.5" height="1.5"/><rect x="576.75" y="366.75" width="1.5" height="1.5"/><rect x="584.25" y="366.75" width="1.5" height="1.5"/><rect x="591.75" y="366.75" width="1.5" height="1.5"/><rect x="599.25" y="366.75" width="1.5" height="1.5"/><rect x="606.75" y="366.75" width="1.5" height="1.5"/><rect x="614.25" y="366.75" width="1.5" height="1.5"/><rect x="621.75" y="366.75" width="1.5" height="1.5"/><rect x="629.25" y="366.75" width="1.5" height="1.5"/><rect x="366.75" y="374.25" width="1.5" height="1.5"/><rect x="374.25" y="374.25" width="1.5" height="1.5"/><rect x="381.75" y="374.25" width="1.5" height="1.5"/><rect x="389.25" y="374.25" width="1.5" height="1.5"/><rect x="396.75" y="374.25" width="1.5" height="1.5"/><rect x="404.25" y="374.25" width="1.5" height="1.5"/><rect x="411.75" y="374.25" width="1.5" height="1.5"/><rect x="419.25" y="374.25" width="1.5" height="1.5"/><rect x="426.75" y="374.25" width="1.5" height="1.5"/><rect x="434.25" y="374.25" width="1.5" height="1.5"/><rect x="441.75" y="374.25" width="1.5" height="1.5"/><rect x="449.25" y="374.25" width="1.5" height="1.5"/><rect x="456.75" y="374.25" width="1.5" height="1.5"/><rect x="464.25" y="374.25" width="1.5" height="1.5"/><rect x="471.75" y="374.25" width="1.5" height="1.5"/><rect x="479.25" y="374.25" width="1.5" height="1.5"/><rect x="486.75" y="374.25" width="1.5" height="1.5"/><rect x="494.25" y="374.25" width="1.5" height="1.5"/><rect x="501.75" y="374.25" width="1.5" height="1.5"/><rect x="509.25" y="374.25" width="1.5" height="1.5"/><rect x="516.75" y="374.25" width="1.5" height="1.5"/><rect x="524.25" y="374.25" width="1.5" height="1.5"/><rect x="531.75" y="374.25" width="1.5" height="1.5"/><rect x="539.25" y="374.25" width="1.5" height="1.5"/><rect x="546.75" y="374.25" width="1.5" height="1.5"/><rect x="554.25" y="374.25" width="1.5" height="1.5"/><rect x="561.75" y="374.25" width="1.5" height="1.5"/><rect x="569.25" y="374.25" width="1.5" height="1.5"/><rect x="576.75" y="374.25" width="1.5" height="1.5"/><rect x="584.25" y="374.25" width="1.5" height="1.5"/><rect x="591.75" y="374.25" width="1.5" height="1.5"/><rect x="599.25" y="374.25" width="1.5" height="1.5"/><rect x="606.75" y="374.25" width="1.5" height="1.5"/><rect x="614.25" y="374.25" width="1.5" height="1.5"/><rect x="621.75" y="374.25" width="1.5" height="1.5"/><rect x="629.25" y="374.25" width="1.5" height="1.5"/><rect x="366.75" y="381.75" width="1.5" height="1.5"/><rect x="374.25" y="381.75" width="1.5" height="1.5"/><rect x="381.75" y="381.75" width="1.5" height="1.5"/><rect x="389.25" y="381.75" width="1.5" height="1.5"/><rect x="396.75" y="381.75" width="1.5" height="1.5"/><rect x="404.25" y="381.75" width="1.5" height="1.5"/><rect x="411.75" y="381.75" width="1.5" height="1.5"/><rect x="419.25" y="381.75" width="1.5" height="1.5"/><rect x="426.75" y="381.75" width="1.5" height="1.5"/><rect x="434.25" y="381.75" width="1.5" height="1.5"/><rect x="441.75" y="381.75" width="1.5" height="1.5"/><rect x="449.25" y="381.75" width="1.5" height="1.5"/><rect x="456.75" y="381.75" width="1.5" height="1.5"/><rect x="464.25" y="381.75" width="1.5" height="1.5"/><rect x="471.75" y="381.75" width="1.5" height="1.5"/><rect x="479.25" y="381.75" width="1.5" height="1.5"/><rect x="486.75" y="381.75" width="1.5" height="1.5"/><rect x="494.25" y="381.75" width="1.5" height="1.5"/><rect x="501.75" y="381.75" width="1.5" height="1.5"/><rect x="509.25" y="381.75" width="1.5" height="1.5"/><rect x="516.75" y="381.75" width="1.5" height="1.5"/><rect x="524.25" y="381.75" width="1.5" height="1.5"/><rect x="531.75" y="381.75" width="1.5" height="1.5"/><rect x="539.25" y="381.75" width="1.5" height="1.5"/><rect x="546.75" y="381.75" width="1.5" height="1.5"/><rect x="554.25" y="381.75" width="1.5" height="1.5"/><rect x="561.75" y="381.75" width="1.5" height="1.5"/><rect x="569.25" y="381.75" width="1.5" height="1.5"/><rect x="576.75" y="381.75" width="1.5" height="1.5"/><rect x="584.25" y="381.75" width="1.5" height="1.5"/><rect x="591.75" y="381.75" width="1.5" height="1.5"/><rect x="599.25" y="381.75" width="1.5" height="1.5"/><rect x="606.75" y="381.75" width="1.5" height="1.5"/><rect x="614.25" y="381.75" width="1.5" height="1.5"/><rect x="621.75" y="381.75" width="1.5" height="1.5"/><rect x="629.25" y="381.75" width="1.5" height="1.5"/><rect x="366.75" y="389.25" width="1.5" height="1.5"/><rect x="374.25" y="389.25" width="1.5" height="1.5"/><rect x="381.75" y="389.25" width="1.5" height="1.5"/><rect x="389.25" y="389.25" width="1.5" height="1.5"/><rect x="396.75" y="389.25" width="1.5" height="1.5"/><rect x="404.25" y="389.25" width="1.5" height="1.5"/><rect x="411.75" y="389.25" width="1.5" height="1.5"/><rect x="419.25" y="389.25" width="1.5" height="1.5"/><rect x="426.75" y="389.25" width="1.5" height="1.5"/><rect x="434.25" y="389.25" width="1.5" height="1.5"/><rect x="441.75" y="389.25" width="1.5" height="1.5"/><rect x="449.25" y="389.25" width="1.5" height="1.5"/><rect x="456.75" y="389.25" width="1.5" height="1.5"/><rect x="464.25" y="389.25" width="1.5" height="1.5"/><rect x="471.75" y="389.25" width="1.5" height="1.5"/><rect x="479.25" y="389.25" width="1.5" height="1.5"/><rect x="486.75" y="389.25" width="1.5" height="1.5"/><rect x="494.25" y="389.25" width="1.5" height="1.5"/><rect x="501.75" y="389.25" width="1.5" height="1.5"/><rect x="509.25" y="389.25" width="1.5" height="1.5"/><rect x="516.75" y="389.25" width="1.5" height="1.5"/><rect x="524.25" y="389.25" width="1.5" height="1.5"/><rect x="531.75" y="389.25" width="1.5" height="1.5"/><rect x="539.25" y="389.25" width="1.5" height="1.5"/><rect x="546.75" y="389.25" width="1.5" height="1.5"/><rect x="554.25" y="389.25" width="1.5" height="1.5"/><rect x="561.75" y="389.25" width="1.5" height="1.5"/><rect x="569.25" y="389.25" width="1.5" height="1.5"/><rect x="576.75" y="389.25" width="1.5" height="1.5"/><rect x="584.25" y="389.25" width="1.5" height="1.5"/><rect x="591.75" y="389.25" width="1.5" height="1.5"/><rect x="599.25" y="389.25" width="1.5" height="1.5"/><rect x="606.75" y="389.25" width="1.5" height="1.5"/><rect x="614.25" y="389.25" width="1.5" height="1.5"/><rect x="621.75" y="389.25" width="1.5" height="1.5"/><rect x="629.25" y="389.25" width="1.5" height="1.5"/><rect x="366.75" y="396.75" width="1.5" height="1.5"/><rect x="374.25" y="396.75" width="1.5" height="1.5"/><rect x="381.75" y="396.75" width="1.5" height="1.5"/><rect x="389.25" y="396.75" width="1.5" height="1.5"/><rect x="396.75" y="396.75" width="1.5" height="1.5"/><rect x="404.25" y="396.75" width="1.5" height="1.5"/><rect x="411.75" y="396.75" width="1.5" height="1.5"/><rect x="419.25" y="396.75" width="1.5" height="1.5"/><rect x="426.75" y="396.75" width="1.5" height="1.5"/><rect x="434.25" y="396.75" width="1.5" height="1.5"/><rect x="441.75" y="396.75" width="1.5" height="1.5"/><rect x="449.25" y="396.75" width="1.5" height="1.5"/><rect x="456.75" y="396.75" width="1.5" height="1.5"/><rect x="464.25" y="396.75" width="1.5" height="1.5"/><rect x="471.75" y="396.75" width="1.5" height="1.5"/><rect x="479.25" y="396.75" width="1.5" height="1.5"/><rect x="486.75" y="396.75" width="1.5" height="1.5"/><rect x="494.25" y="396.75" width="1.5" height="1.5"/><rect x="501.75" y="396.75" width="1.5" height="1.5"/><rect x="509.25" y="396.75" width="1.5" height="1.5"/><rect x="516.75" y="396.75" width="1.5" height="1.5"/><rect x="524.25" y="396.75" width="1.5" height="1.5"/><rect x="531.75" y="396.75" width="1.5" height="1.5"/><rect x="539.25" y="396.75" width="1.5" height="1.5"/><rect x="546.75" y="396.75" width="1.5" height="1.5"/><rect x="554.25" y="396.75" width="1.5" height="1.5"/><rect x="561.75" y="396.75" width="1.5" height="1.5"/><rect x="569.25" y="396.75" width="1.5" height="1.5"/><rect x="576.75" y="396.75" width="1.5" height="1.5"/><rect x="584.25" y="396.75" width="1.5" height="1.5"/><rect x="591.75" y="396.75" width="1.5" height="1.5"/><rect x="599.25" y="396.75" width="1.5" height="1.5"/><rect x="606.75" y="396.75" width="1.5" height="1.5"/><rect x="614.25" y="396.75" width="1.5" height="1.5"/><rect x="621.75" y="396.75" width="1.5" height="1.5"/><rect x="629.25" y="396.75" width="1.5" height="1.5"/><rect x="366.75" y="404.25" width="1.5" height="1.5"/><rect x="374.25" y="404.25" width="1.5" height="1.5"/><rect x="381.75" y="404.25" width="1.5" height="1.5"/><rect x="389.25" y="404.25" width="1.5" height="1.5"/><rect x="396.75" y="404.25" width="1.5" height="1.5"/><rect x="404.25" y="404.25" width="1.5" height="1.5"/><rect x="411.75" y="404.25" width="1.5" height="1.5"/><rect x="419.25" y="404.25" width="1.5" height="1.5"/><rect x="426.75" y="404.25" width="1.5" height="1.5"/><rect x="434.25" y="404.25" width="1.5" height="1.5"/><rect x="441.75" y="404.25" width="1.5" height="1.5"/><rect x="449.25" y="404.25" width="1.5" height="1.5"/><rect x="456.75" y="404.25" width="1.5" height="1.5"/><rect x="464.25" y="404.25" width="1.5" height="1.5"/><rect x="471.75" y="404.25" width="1.5" height="1.5"/><rect x="479.25" y="404.25" width="1.5" height="1.5"/><rect x="486.75" y="404.25" width="1.5" height="1.5"/><rect x="494.25" y="404.25" width="1.5" height="1.5"/><rect x="501.75" y="404.25" width="1.5" height="1.5"/><rect x="509.25" y="404.25" width="1.5" height="1.5"/><rect x="516.75" y="404.25" width="1.5" height="1.5"/><rect x="524.25" y="404.25" width="1.5" height="1.5"/><rect x="531.75" y="404.25" width="1.5" height="1.5"/><rect x="539.25" y="404.25" width="1.5" height="1.5"/><rect x="546.75" y="404.25" width="1.5" height="1.5"/><rect x="554.25" y="404.25" width="1.5" height="1.5"/><rect x="561.75" y="404.25" width="1.5" height="1.5"/><rect x="569.25" y="404.25" width="1.5" height="1.5"/><rect x="576.75" y="404.25" width="1.5" height="1.5"/><rect x="584.25" y="404.25" width="1.5" height="1.5"/><rect x="591.75" y="404.25" width="1.5" height="1.5"/><rect x="599.25" y="404.25" width="1.5" height="1.5"/><rect x="606.75" y="404.25" width="1.5" height="1.5"/><rect x="614.25" y="404.25" width="1.5" height="1.5"/><rect x="621.75" y="404.25" width="1.5" height="1.5"/><rect x="629.25" y="404.25" width="1.5" height="1.5"/><rect x="366.75" y="411.75" width="1.5" height="1.5"/><rect x="374.25" y="411.75" width="1.5" height="1.5"/><rect x="381.75" y="411.75" width="1.5" height="1.5"/><rect x="389.25" y="411.75" width="1.5" height="1.5"/><rect x="396.75" y="411.75" width="1.5" height="1.5"/><rect x="404.25" y="411.75" width="1.5" height="1.5"/><rect x="411.75" y="411.75" width="1.5" height="1.5"/><rect x="419.25" y="411.75" width="1.5" height="1.5"/><rect x="426.75" y="411.75" width="1.5" height="1.5"/><rect x="434.25" y="411.75" width="1.5" height="1.5"/><rect x="441.75" y="411.75" width="1.5" height="1.5"/><rect x="449.25" y="411.75" width="1.5" height="1.5"/><rect x="456.75" y="411.75" width="1.5" height="1.5"/><rect x="464.25" y="411.75" width="1.5" height="1.5"/><rect x="471.75" y="411.75" width="1.5" height="1.5"/><rect x="479.25" y="411.75" width="1.5" height="1.5"/><rect x="486.75" y="411.75" width="1.5" height="1.5"/><rect x="494.25" y="411.75" width="1.5" height="1.5"/><rect x="501.75" y="411.75" width="1.5" height="1.5"/><rect x="509.25" y="411.75" width="1.5" height="1.5"/><rect x="516.75" y="411.75" width="1.5" height="1.5"/><rect x="524.25" y="411.75" width="1.5" height="1.5"/><rect x="531.75" y="411.75" width="1.5" height="1.5"/><rect x="539.25" y="411.75" width="1.5" height="1.5"/><rect x="546.75" y="411.75" width="1.5" height="1.5"/><rect x="554.25" y="411.75" width="1.5" height="1.5"/><rect x="561.75" y="411.75" width="1.5" height="1.5"/><rect x="569.25" y="411.75" width="1.5" height="1.5"/><rect x="576.75" y="411.75" width="1.5" height="1.5"/><rect x="584.25" y="411.75" width="1.5" height="1.5"/><rect x="591.75" y="411.75" width="1.5" height="1.5"/><rect x="599.25" y="411.75" width="1.5" height="1.5"/><rect x="606.75" y="411.75" width="1.5" height="1.5"/><rect x="614.25" y="411.75" width="1.5" height="1.5"/><rect x="621.75" y="411.75" width="1.5" height="1.5"/><rect x="629.25" y="411.75" width="1.5" height="1.5"/><rect x="366.75" y="419.25" width="1.5" height="1.5"/><rect x="374.25" y="419.25" width="1.5" height="1.5"/><rect x="381.75" y="419.25" width="1.5" height="1.5"/><rect x="389.25" y="419.25" width="1.5" height="1.5"/><rect x="396.75" y="419.25" width="1.5" height="1.5"/><rect x="404.25" y="419.25" width="1.5" height="1.5"/><rect x="411.75" y="419.25" width="1.5" height="1.5"/><rect x="419.25" y="419.25" width="1.5" height="1.5"/><rect x="426.75" y="419.25" width="1.5" height="1.5"/><rect x="434.25" y="419.25" width="1.5" height="1.5"/><rect x="441.75" y="419.25" width="1.5" height="1.5"/><rect x="449.25" y="419.25" width="1.5" height="1.5"/><rect x="456.75" y="419.25" width="1.5" height="1.5"/><rect x="464.25" y="419.25" width="1.5" height="1.5"/><rect x="471.75" y="419.25" width="1.5" height="1.5"/><rect x="479.25" y="419.25" width="1.5" height="1.5"/><rect x="486.75" y="419.25" width="1.5" height="1.5"/><rect x="494.25" y="419.25" width="1.5" height="1.5"/><rect x="501.75" y="419.25" width="1.5" height="1.5"/><rect x="509.25" y="419.25" width="1.5" height="1.5"/><rect x="516.75" y="419.25" width="1.5" height="1.5"/><rect x="524.25" y="419.25" width="1.5" height="1.5"/><rect x="531.75" y="419.25" width="1.5" height="1.5"/><rect x="539.25" y="419.25" width="1.5" height="1.5"/><rect x="546.75" y="419.25" width="1.5" height="1.5"/><rect x="554.25" y="419.25" width="1.5" height="1.5"/><rect x="561.75" y="419.25" width="1.5" height="1.5"/><rect x="569.25" y="419.25" width="1.5" height="1.5"/><rect x="576.75" y="419.25" width="1.5" height="1.5"/><rect x="584.25" y="419.25" width="1.5" height="1.5"/><rect x="591.75" y="419.25" width="1.5" height="1.5"/><rect x="599.25" y="419.25" width="1.5" height="1.5"/><rect x="606.75" y="419.25" width="1.5" height="1.5"/><rect x="614.25" y="419.25" width="1.5" height="1.5"/><rect x="621.75" y="419.25" width="1.5" height="1.5"/><rect x="629.25" y="419.25" width="1.5" height="1.5"/><rect x="366.75" y="426.75" width="1.5" height="1.5"/><rect x="374.25" y="426.75" width="1.5" height="1.5"/><rect x="381.75" y="426.75" width="1.5" height="1.5"/><rect x="389.25" y="426.75" width="1.5" height="1.5"/><rect x="396.75" y="426.75" width="1.5" height="1.5"/><rect x="404.25" y="426.75" width="1.5" height="1.5"/><rect x="411.75" y="426.75" width="1.5" height="1.5"/><rect x="419.25" y="426.75" width="1.5" height="1.5"/><rect x="426.75" y="426.75" width="1.5" height="1.5"/><rect x="434.25" y="426.75" width="1.5" height="1.5"/><rect x="441.75" y="426.75" width="1.5" height="1.5"/><rect x="449.25" y="426.75" width="1.5" height="1.5"/><rect x="456.75" y="426.75" width="1.5" height="1.5"/><rect x="464.25" y="426.75" width="1.5" height="1.5"/><rect x="471.75" y="426.75" width="1.5" height="1.5"/><rect x="479.25" y="426.75" width="1.5" height="1.5"/><rect x="486.75" y="426.75" width="1.5" height="1.5"/><rect x="494.25" y="426.75" width="1.5" height="1.5"/><rect x="501.75" y="426.75" width="1.5" height="1.5"/><rect x="509.25" y="426.75" width="1.5" height="1.5"/><rect x="516.75" y="426.75" width="1.5" height="1.5"/><rect x="524.25" y="426.75" width="1.5" height="1.5"/><rect x="531.75" y="426.75" width="1.5" height="1.5"/><rect x="539.25" y="426.75" width="1.5" height="1.5"/><rect x="546.75" y="426.75" width="1.5" height="1.5"/><rect x="554.25" y="426.75" width="1.5" height="1.5"/><rect x="561.75" y="426.75" width="1.5" height="1.5"/><rect x="569.25" y="426.75" width="1.5" height="1.5"/><rect x="576.75" y="426.75" width="1.5" height="1.5"/><rect x="584.25" y="426.75" width="1.5" height="1.5"/><rect x="591.75" y="426.75" width="1.5" height="1.5"/><rect x="599.25" y="426.75" width="1.5" height="1.5"/><rect x="606.75" y="426.75" width="1.5" height="1.5"/><rect x="614.25" y="426.75" width="1.5" height="1.5"/><rect x="621.75" y="426.75" width="1.5" height="1.5"/><rect x="629.25" y="426.75" width="1.5" height="1.5"/><rect x="366.75" y="434.25" width="1.5" height="1.5"/><rect x="374.25" y="434.25" width="1.5" height="1.5"/><rect x="381.75" y="434.25" width="1.5" height="1.5"/><rect x="389.25" y="434.25" width="1.5" height="1.5"/><rect x="396.75" y="434.25" width="1.5" height="1.5"/><rect x="404.25" y="434.25" width="1.5" height="1.5"/><rect x="411.75" y="434.25" width="1.5" height="1.5"/><rect x="419.25" y="434.25" width="1.5" height="1.5"/><rect x="426.75" y="434.25" width="1.5" height="1.5"/><rect x="434.25" y="434.25" width="1.5" height="1.5"/><rect x="441.75" y="434.25" width="1.5" height="1.5"/><rect x="449.25" y="434.25" width="1.5" height="1.5"/><rect x="456.75" y="434.25" width="1.5" height="1.5"/><rect x="464.25" y="434.25" width="1.5" height="1.5"/><rect x="471.75" y="434.25" width="1.5" height="1.5"/><rect x="479.25" y="434.25" width="1.5" height="1.5"/><rect x="486.75" y="434.25" width="1.5" height="1.5"/><rect x="494.25" y="434.25" width="1.5" height="1.5"/><rect x="501.75" y="434.25" width="1.5" height="1.5"/><rect x="509.25" y="434.25" width="1.5" height="1.5"/><rect x="516.75" y="434.25" width="1.5" height="1.5"/><rect x="524.25" y="434.25" width="1.5" height="1.5"/><rect x="531.75" y="434.25" width="1.5" height="1.5"/><rect x="539.25" y="434.25" width="1.5" height="1.5"/><rect x="546.75" y="434.25" width="1.5" height="1.5"/><rect x="554.25" y="434.25" width="1.5" height="1.5"/><rect x="561.75" y="434.25" width="1.5" height="1.5"/><rect x="569.25" y="434.25" width="1.5" height="1.5"/><rect x="576.75" y="434.25" width="1.5" height="1.5"/><rect x="584.25" y="434.25" width="1.5" height="1.5"/><rect x="591.75" y="434.25" width="1.5" height="1.5"/><rect x="599.25" y="434.25" width="1.5" height="1.5"/><rect x="606.75" y="434.25" width="1.5" height="1.5"/><rect x="614.25" y="434.25" width="1.5" height="1.5"/><rect x="621.75" y="434.25" width="1.5" height="1.5"/><rect x="629.25" y="434.25" width="1.5" height="1.5"/><rect x="366.75" y="441.75" width="1.5" height="1.5"/><rect x="374.25" y="441.75" width="1.5" height="1.5"/><rect x="381.75" y="441.75" width="1.5" height="1.5"/><rect x="389.25" y="441.75" width="1.5" height="1.5"/><rect x="396.75" y="441.75" width="1.5" height="1.5"/><rect x="404.25" y="441.75" width="1.5" height="1.5"/><rect x="411.75" y="441.75" width="1.5" height="1.5"/><rect x="419.25" y="441.75" width="1.5" height="1.5"/><rect x="426.75" y="441.75" width="1.5" height="1.5"/><rect x="434.25" y="441.75" width="1.5" height="1.5"/><rect x="441.75" y="441.75" width="1.5" height="1.5"/><rect x="449.25" y="441.75" width="1.5" height="1.5"/><rect x="456.75" y="441.75" width="1.5" height="1.5"/><rect x="464.25" y="441.75" width="1.5" height="1.5"/><rect x="471.75" y="441.75" width="1.5" height="1.5"/><rect x="479.25" y="441.75" width="1.5" height="1.5"/><rect x="486.75" y="441.75" width="1.5" height="1.5"/><rect x="494.25" y="441.75" width="1.5" height="1.5"/><rect x="501.75" y="441.75" width="1.5" height="1.5"/><rect x="509.25" y="441.75" width="1.5" height="1.5"/><rect x="516.75" y="441.75" width="1.5" height="1.5"/><rect x="524.25" y="441.75" width="1.5" height="1.5"/><rect x="531.75" y="441.75" width="1.5" height="1.5"/><rect x="539.25" y="441.75" width="1.5" height="1.5"/><rect x="546.75" y="441.75" width="1.5" height="1.5"/><rect x="554.25" y="441.75" width="1.5" height="1.5"/><rect x="561.75" y="441.75" width="1.5" height="1.5"/><rect x="569.25" y="441.75" width="1.5" height="1.5"/><rect x="576.75" y="441.75" width="1.5" height="1.5"/><rect x="584.25" y="441.75" width="1.5" height="1.5"/><rect x="591.75" y="441.75" width="1.5" height="1.5"/><rect x="599.25" y="441.75" width="1.5" height="1.5"/><rect x="606.75" y="441.75" width="1.5" height="1.5"/><rect x="614.25" y="441.75" width="1.5" height="1.5"/><rect x="621.75" y="441.75" width="1.5" height="1.5"/><rect x="629.25" y="441.75" width="1.5" height="1.5"/><rect x="366.75" y="449.25" width="1.5" height="1.5"/><rect x="374.25" y="449.25" width="1.5" height="1.5"/><rect x="381.75" y="449.25" width="1.5" height="1.5"/><rect x="389.25" y="449.25" width="1.5" height="1.5"/><rect x="396.75" y="449.25" width="1.5" height="1.5"/><rect x="404.25" y="449.25" width="1.5" height="1.5"/><rect x="411.75" y="449.25" width="1.5" height="1.5"/><rect x="419.25" y="449.25" width="1.5" height="1.5"/><rect x="426.75" y="449.25" width="1.5" height="1.5"/><rect x="434.25" y="449.25" width="1.5" height="1.5"/><rect x="441.75" y="449.25" width="1.5" height="1.5"/><rect x="449.25" y="449.25" width="1.5" height="1.5"/><rect x="456.75" y="449.25" width="1.5" height="1.5"/><rect x="464.25" y="449.25" width="1.5" height="1.5"/><rect x="471.75" y="449.25" width="1.5" height="1.5"/><rect x="479.25" y="449.25" width="1.5" height="1.5"/><rect x="486.75" y="449.25" width="1.5" height="1.5"/><rect x="494.25" y="449.25" width="1.5" height="1.5"/><rect x="501.75" y="449.25" width="1.5" height="1.5"/><rect x="509.25" y="449.25" width="1.5" height="1.5"/><rect x="516.75" y="449.25" width="1.5" height="1.5"/><rect x="524.25" y="449.25" width="1.5" height="1.5"/><rect x="531.75" y="449.25" width="1.5" height="1.5"/><rect x="539.25" y="449.25" width="1.5" height="1.5"/><rect x="546.75" y="449.25" width="1.5" height="1.5"/><rect x="554.25" y="449.25" width="1.5" height="1.5"/><rect x="561.75" y="449.25" width="1.5" height="1.5"/><rect x="569.25" y="449.25" width="1.5" height="1.5"/><rect x="576.75" y="449.25" width="1.5" height="1.5"/><rect x="584.25" y="449.25" width="1.5" height="1.5"/><rect x="591.75" y="449.25" width="1.5" height="1.5"/><rect x="599.25" y="449.25" width="1.5" height="1.5"/><rect x="606.75" y="449.25" width="1.5" height="1.5"/><rect x="614.25" y="449.25" width="1.5" height="1.5"/><rect x="621.75" y="449.25" width="1.5" height="1.5"/><rect x="629.25" y="449.25" width="1.5" height="1.5"/><rect x="366.75" y="456.75" width="1.5" height="1.5"/><rect x="374.25" y="456.75" width="1.5" height="1.5"/><rect x="381.75" y="456.75" width="1.5" height="1.5"/><rect x="389.25" y="456.75" width="1.5" height="1.5"/><rect x="396.75" y="456.75" width="1.5" height="1.5"/><rect x="404.25" y="456.75" width="1.5" height="1.5"/><rect x="411.75" y="456.75" width="1.5" height="1.5"/><rect x="419.25" y="456.75" width="1.5" height="1.5"/><rect x="426.75" y="456.75" width="1.5" height="1.5"/><rect x="434.25" y="456.75" width="1.5" height="1.5"/><rect x="441.75" y="456.75" width="1.5" height="1.5"/><rect x="449.25" y="456.75" width="1.5" height="1.5"/><rect x="456.75" y="456.75" width="1.5" height="1.5"/><rect x="464.25" y="456.75" width="1.5" height="1.5"/><rect x="471.75" y="456.75" width="1.5" height="1.5"/><rect x="479.25" y="456.75" width="1.5" height="1.5"/><rect x="486.75" y="456.75" width="1.5" height="1.5"/><rect x="494.25" y="456.75" width="1.5" height="1.5"/><rect x="501.75" y="456.75" width="1.5" height="1.5"/><rect x="509.25" y="456.75" width="1.5" height="1.5"/><rect x="516.75" y="456.75" width="1.5" height="1.5"/><rect x="524.25" y="456.75" width="1.5" height="1.5"/><rect x="531.75" y="456.75" width="1.5" height="1.5"/><rect x="539.25" y="456.75" width="1.5" height="1.5"/><rect x="546.75" y="456.75" width="1.5" height="1.5"/><rect x="554.25" y="456.75" width="1.5" height="1.5"/><rect x="561.75" y="456.75" width="1.5" height="1.5"/><rect x="569.25" y="456.75" width="1.5" height="1.5"/><rect x="576.75" y="456.75" width="1.5" height="1.5"/><rect x="584.25" y="456.75" width="1.5" height="1.5"/><rect x="591.75" y="456.75" width="1.5" height="1.5"/><rect x="599.25" y="456.75" width="1.5" height="1.5"/><rect x="606.75" y="456.75" width="1.5" height="1.5"/><rect x="614.25" y="456.75" width="1.5" height="1.5"/><rect x="621.75" y="456.75" width="1.5" height="1.5"/><rect x="629.25" y="456.75" width="1.5" height="1.5"/><rect x="366.75" y="464.25" width="1.5" height="1.5"/><rect x="374.25" y="464.25" width="1.5" height="1.5"/><rect x="381.75" y="464.25" width="1.5" height="1.5"/><rect x="389.25" y="464.25" width="1.5" height="1.5"/><rect x="396.75" y="464.25" width="1.5" height="1.5"/><rect x="404.25" y="464.25" width="1.5" height="1.5"/><rect x="411.75" y="464.25" width="1.5" height="1.5"/><rect x="419.25" y="464.25" width="1.5" height="1.5"/><rect x="426.75" y="464.25" width="1.5" height="1.5"/><rect x="434.25" y="464.25" width="1.5" height="1.5"/><rect x="441.75" y="464.25" width="1.5" height="1.5"/><rect x="449.25" y="464.25" width="1.5" height="1.5"/><rect x="456.75" y="464.25" width="1.5" height="1.5"/><rect x="464.25" y="464.25" width="1.5" height="1.5"/><rect x="471.75" y="464.25" width="1.5" height="1.5"/><rect x="479.25" y="464.25" width="1.5" height="1.5"/><rect x="486.75" y="464.25" width="1.5" height="1.5"/><rect x="494.25" y="464.25" width="1.5" height="1.5"/><rect x="501.75" y="464.25" width="1.5" height="1.5"/><rect x="509.25" y="464.25" width="1.5" height="1.5"/><rect x="516.75" y="464.25" width="1.5" height="1.5"/><rect x="524.25" y="464.25" width="1.5" height="1.5"/><rect x="531.75" y="464.25" width="1.5" height="1.5"/><rect x="539.25" y="464.25" width="1.5" height="1.5"/><rect x="546.75" y="464.25" width="1.5" height="1.5"/><rect x="554.25" y="464.25" width="1.5" height="1.5"/><rect x="561.75" y="464.25" width="1.5" height="1.5"/><rect x="569.25" y="464.25" width="1.5" height="1.5"/><rect x="576.75" y="464.25" width="1.5" height="1.5"/><rect x="584.25" y="464.25" width="1.5" height="1.5"/><rect x="591.75" y="464.25" width="1.5" height="1.5"/><rect x="599.25" y="464.25" width="1.5" height="1.5"/><rect x="606.75" y="464.25" width="1.5" height="1.5"/><rect x="614.25" y="464.25" width="1.5" height="1.5"/><rect x="621.75" y="464.25" width="1.5" height="1.5"/><rect x="629.25" y="464.25" width="1.5" height="1.5"/><rect x="366.75" y="471.75" width="1.5" height="1.5"/><rect x="374.25" y="471.75" width="1.5" height="1.5"/><rect x="381.75" y="471.75" width="1.5" height="1.5"/><rect x="389.25" y="471.75" width="1.5" height="1.5"/><rect x="396.75" y="471.75" width="1.5" height="1.5"/><rect x="404.25" y="471.75" width="1.5" height="1.5"/><rect x="411.75" y="471.75" width="1.5" height="1.5"/><rect x="419.25" y="471.75" width="1.5" height="1.5"/><rect x="426.75" y="471.75" width="1.5" height="1.5"/><rect x="434.25" y="471.75" width="1.5" height="1.5"/><rect x="441.75" y="471.75" width="1.5" height="1.5"/><rect x="449.25" y="471.75" width="1.5" height="1.5"/><rect x="456.75" y="471.75" width="1.5" height="1.5"/><rect x="464.25" y="471.75" width="1.5" height="1.5"/><rect x="471.75" y="471.75" width="1.5" height="1.5"/><rect x="479.25" y="471.75" width="1.5" height="1.5"/><rect x="486.75" y="471.75" width="1.5" height="1.5"/><rect x="494.25" y="471.75" width="1.5" height="1.5"/><rect x="501.75" y="471.75" width="1.5" height="1.5"/><rect x="509.25" y="471.75" width="1.5" height="1.5"/><rect x="516.75" y="471.75" width="1.5" height="1.5"/><rect x="524.25" y="471.75" width="1.5" height="1.5"/><rect x="531.75" y="471.75" width="1.5" height="1.5"/><rect x="539.25" y="471.75" width="1.5" height="1.5"/><rect x="546.75" y="471.75" width="1.5" height="1.5"/><rect x="554.25" y="471.75" width="1.5" height="1.5"/><rect x="561.75" y="471.75" width="1.5" height="1.5"/><rect x="569.25" y="471.75" width="1.5" height="1.5"/><rect x="576.75" y="471.75" width="1.5" height="1.5"/><rect x="584.25" y="471.75" width="1.5" height="1.5"/><rect x="591.75" y="471.75" width="1.5" height="1.5"/><rect x="599.25" y="471.75" width="1.5" height="1.5"/><rect x="606.75" y="471.75" width="1.5" height="1.5"/><rect x="614.25" y="471.75" width="1.5" height="1.5"/><rect x="621.75" y="471.75" width="1.5" height="1.5"/><rect x="629.25" y="471.75" width="1.5" height="1.5"/><rect x="366.75" y="479.25" width="1.5" height="1.5"/><rect x="374.25" y="479.25" width="1.5" height="1.5"/><rect x="381.75" y="479.25" width="1.5" height="1.5"/><rect x="389.25" y="479.25" width="1.5" height="1.5"/><rect x="396.75" y="479.25" width="1.5" height="1.5"/><rect x="404.25" y="479.25" width="1.5" height="1.5"/><rect x="411.75" y="479.25" width="1.5" height="1.5"/><rect x="419.25" y="479.25" width="1.5" height="1.5"/><rect x="426.75" y="479.25" width="1.5" height="1.5"/><rect x="434.25" y="479.25" width="1.5" height="1.5"/><rect x="441.75" y="479.25" width="1.5" height="1.5"/><rect x="449.25" y="479.25" width="1.5" height="1.5"/><rect x="456.75" y="479.25" width="1.5" height="1.5"/><rect x="464.25" y="479.25" width="1.5" height="1.5"/><rect x="471.75" y="479.25" width="1.5" height="1.5"/><rect x="479.25" y="479.25" width="1.5" height="1.5"/><rect x="486.75" y="479.25" width="1.5" height="1.5"/><rect x="494.25" y="479.25" width="1.5" height="1.5"/><rect x="501.75" y="479.25" width="1.5" height="1.5"/><rect x="509.25" y="479.25" width="1.5" height="1.5"/><rect x="516.75" y="479.25" width="1.5" height="1.5"/><rect x="524.25" y="479.25" width="1.5" height="1.5"/><rect x="531.75" y="479.25" width="1.5" height="1.5"/><rect x="539.25" y="479.25" width="1.5" height="1.5"/><rect x="546.75" y="479.25" width="1.5" height="1.5"/><rect x="554.25" y="479.25" width="1.5" height="1.5"/><rect x="561.75" y="479.25" width="1.5" height="1.5"/><rect x="569.25" y="479.25" width="1.5" height="1.5"/><rect x="576.75" y="479.25" width="1.5" height="1.5"/><rect x="584.25" y="479.25" width="1.5" height="1.5"/><rect x="591.75" y="479.25" width="1.5" height="1.5"/><rect x="599.25" y="479.25" width="1.5" height="1.5"/><rect x="606.75" y="479.25" width="1.5" height="1.5"/><rect x="614.25" y="479.25" width="1.5" height="1.5"/><rect x="621.75" y="479.25" width="1.5" height="1.5"/><rect x="629.25" y="479.25" width="1.5" height="1.5"/><rect x="366.75" y="486.75" width="1.5" height="1.5"/><rect x="374.25" y="486.75" width="1.5" height="1.5"/><rect x="381.75" y="486.75" width="1.5" height="1.5"/><rect x="389.25" y="486.75" width="1.5" height="1.5"/><rect x="396.75" y="486.75" width="1.5" height="1.5"/><rect x="404.25" y="486.75" width="1.5" height="1.5"/><rect x="411.75" y="486.75" width="1.5" height="1.5"/><rect x="419.25" y="486.75" width="1.5" height="1.5"/><rect x="426.75" y="486.75" width="1.5" height="1.5"/><rect x="434.25" y="486.75" width="1.5" height="1.5"/><rect x="441.75" y="486.75" width="1.5" height="1.5"/><rect x="449.25" y="486.75" width="1.5" height="1.5"/><rect x="456.75" y="486.75" width="1.5" height="1.5"/><rect x="464.25" y="486.75" width="1.5" height="1.5"/><rect x="471.75" y="486.75" width="1.5" height="1.5"/><rect x="479.25" y="486.75" width="1.5" height="1.5"/><rect x="486.75" y="486.75" width="1.5" height="1.5"/><rect x="494.25" y="486.75" width="1.5" height="1.5"/><rect x="501.75" y="486.75" width="1.5" height="1.5"/><rect x="509.25" y="486.75" width="1.5" height="1.5"/><rect x="516.75" y="486.75" width="1.5" height="1.5"/><rect x="524.25" y="486.75" width="1.5" height="1.5"/><rect x="531.75" y="486.75" width="1.5" height="1.5"/><rect x="539.25" y="486.75" width="1.5" height="1.5"/><rect x="546.75" y="486.75" width="1.5" height="1.5"/><rect x="554.25" y="486.75" width="1.5" height="1.5"/><rect x="561.75" y="486.75" width="1.5" height="1.5"/><rect x="569.25" y="486.75" width="1.5" height="1.5"/><rect x="576.75" y="486.75" width="1.5" height="1.5"/><rect x="584.25" y="486.75" width="1.5" height="1.5"/><rect x="591.75" y="486.75" width="1.5" height="1.5"/><rect x="599.25" y="486.75" width="1.5" height="1.5"/><rect x="606.75" y="486.75" width="1.5" height="1.5"/><rect x="614.25" y="486.75" width="1.5" height="1.5"/><rect x="621.75" y="486.75" width="1.5" height="1.5"/><rect x="629.25" y="486.75" width="1.5" height="1.5"/><rect x="366.75" y="494.25" width="1.5" height="1.5"/><rect x="374.25" y="494.25" width="1.5" height="1.5"/><rect x="381.75" y="494.25" width="1.5" height="1.5"/><rect x="389.25" y="494.25" width="1.5" height="1.5"/><rect x="396.75" y="494.25" width="1.5" height="1.5"/><rect x="404.25" y="494.25" width="1.5" height="1.5"/><rect x="411.75" y="494.25" width="1.5" height="1.5"/><rect x="419.25" y="494.25" width="1.5" height="1.5"/><rect x="426.75" y="494.25" width="1.5" height="1.5"/><rect x="434.25" y="494.25" width="1.5" height="1.5"/><rect x="441.75" y="494.25" width="1.5" height="1.5"/><rect x="449.25" y="494.25" width="1.5" height="1.5"/><rect x="456.75" y="494.25" width="1.5" height="1.5"/><rect x="464.25" y="494.25" width="1.5" height="1.5"/><rect x="471.75" y="494.25" width="1.5" height="1.5"/><rect x="479.25" y="494.25" width="1.5" height="1.5"/><rect x="486.75" y="494.25" width="1.5" height="1.5"/><rect x="494.25" y="494.25" width="1.5" height="1.5"/><rect x="501.75" y="494.25" width="1.5" height="1.5"/><rect x="509.25" y="494.25" width="1.5" height="1.5"/><rect x="516.75" y="494.25" width="1.5" height="1.5"/><rect x="524.25" y="494.25" width="1.5" height="1.5"/><rect x="531.75" y="494.25" width="1.5" height="1.5"/><rect x="539.25" y="494.25" width="1.5" height="1.5"/><rect x="546.75" y="494.25" width="1.5" height="1.5"/><rect x="554.25" y="494.25" width="1.5" height="1.5"/><rect x="561.75" y="494.25" width="1.5" height="1.5"/><rect x="569.25" y="494.25" width="1.5" height="1.5"/><rect x="576.75" y="494.25" width="1.5" height="1.5"/><rect x="584.25" y="494.25" width="1.5" height="1.5"/><rect x="591.75" y="494.25" width="1.5" height="1.5"/><rect x="599.25" y="494.25" width="1.5" height="1.5"/><rect x="606.75" y="494.25" width="1.5" height="1.5"/><rect x="614.25" y="494.25" width="1.5" height="1.5"/><rect x="621.75" y="494.25" width="1.5" height="1.5"/><rect x="629.25" y="494.25" width="1.5" height="1.5"/><rect x="366.75" y="501.75" width="1.5" height="1.5"/><rect x="374.25" y="501.75" width="1.5" height="1.5"/><rect x="381.75" y="501.75" width="1.5" height="1.5"/><rect x="389.25" y="501.75" width="1.5" height="1.5"/><rect x="396.75" y="501.75" width="1.5" height="1.5"/><rect x="404.25" y="501.75" width="1.5" height="1.5"/><rect x="411.75" y="501.75" width="1.5" height="1.5"/><rect x="419.25" y="501.75" width="1.5" height="1.5"/><rect x="426.75" y="501.75" width="1.5" height="1.5"/><rect x="434.25" y="501.75" width="1.5" height="1.5"/><rect x="441.75" y="501.75" width="1.5" height="1.5"/><rect x="449.25" y="501.75" width="1.5" height="1.5"/><rect x="456.75" y="501.75" width="1.5" height="1.5"/><rect x="464.25" y="501.75" width="1.5" height="1.5"/><rect x="471.75" y="501.75" width="1.5" height="1.5"/><rect x="479.25" y="501.75" width="1.5" height="1.5"/><rect x="486.75" y="501.75" width="1.5" height="1.5"/><rect x="494.25" y="501.75" width="1.5" height="1.5"/><rect x="501.75" y="501.75" width="1.5" height="1.5"/><rect x="509.25" y="501.75" width="1.5" height="1.5"/><rect x="516.75" y="501.75" width="1.5" height="1.5"/><rect x="524.25" y="501.75" width="1.5" height="1.5"/><rect x="531.75" y="501.75" width="1.5" height="1.5"/><rect x="539.25" y="501.75" width="1.5" height="1.5"/><rect x="546.75" y="501.75" width="1.5" height="1.5"/><rect x="554.25" y="501.75" width="1.5" height="1.5"/><rect x="561.75" y="501.75" width="1.5" height="1.5"/><rect x="569.25" y="501.75" width="1.5" height="1.5"/><rect x="576.75" y="501.75" width="1.5" height="1.5"/><rect x="584.25" y="501.75" width="1.5" height="1.5"/><rect x="591.75" y="501.75" width="1.5" height="1.5"/><rect x="599.25" y="501.75" width="1.5" height="1.5"/><rect x="606.75" y="501.75" width="1.5" height="1.5"/><rect x="614.25" y="501.75" width="1.5" height="1.5"/><rect x="621.75" y="501.75" width="1.5" height="1.5"/><rect x="629.25" y="501.75" width="1.5" height="1.5"/><rect x="366.75" y="509.25" width="1.5" height="1.5"/><rect x="374.25" y="509.25" width="1.5" height="1.5"/><rect x="381.75" y="509.25" width="1.5" height="1.5"/><rect x="389.25" y="509.25" width="1.5" height="1.5"/><rect x="396.75" y="509.25" width="1.5" height="1.5"/><rect x="404.25" y="509.25" width="1.5" height="1.5"/><rect x="411.75" y="509.25" width="1.5" height="1.5"/><rect x="419.25" y="509.25" width="1.5" height="1.5"/><rect x="426.75" y="509.25" width="1.5" height="1.5"/><rect x="434.25" y="509.25" width="1.5" height="1.5"/><rect x="441.75" y="509.25" width="1.5" height="1.5"/><rect x="449.25" y="509.25" width="1.5" height="1.5"/><rect x="456.75" y="509.25" width="1.5" height="1.5"/><rect x="464.25" y="509.25" width="1.5" height="1.5"/><rect x="471.75" y="509.25" width="1.5" height="1.5"/><rect x="479.25" y="509.25" width="1.5" height="1.5"/><rect x="486.75" y="509.25" width="1.5" height="1.5"/><rect x="494.25" y="509.25" width="1.5" height="1.5"/><rect x="501.75" y="509.25" width="1.5" height="1.5"/><rect x="509.25" y="509.25" width="1.5" height="1.5"/><rect x="516.75" y="509.25" width="1.5" height="1.5"/><rect x="524.25" y="509.25" width="1.5" height="1.5"/><rect x="531.75" y="509.25" width="1.5" height="1.5"/><rect x="539.25" y="509.25" width="1.5" height="1.5"/><rect x="546.75" y="509.25" width="1.5" height="1.5"/><rect x="554.25" y="509.25" width="1.5" height="1.5"/><rect x="561.75" y="509.25" width="1.5" height="1.5"/><rect x="569.25" y="509.25" width="1.5" height="1.5"/><rect x="576.75" y="509.25" width="1.5" height="1.5"/><rect x="584.25" y="509.25" width="1.5" height="1.5"/><rect x="591.75" y="509.25" width="1.5" height="1.5"/><rect x="599.25" y="509.25" width="1.5" height="1.5"/><rect x="606.75" y="509.25" width="1.5" height="1.5"/><rect x="614.25" y="509.25" width="1.5" height="1.5"/><rect x="621.75" y="509.25" width="1.5" height="1.5"/><rect x="629.25" y="509.25" width="1.5" height="1.5"/><rect x="366.75" y="516.75" width="1.5" height="1.5"/><rect x="374.25" y="516.75" width="1.5" height="1.5"/><rect x="381.75" y="516.75" width="1.5" height="1.5"/><rect x="389.25" y="516.75" width="1.5" height="1.5"/><rect x="396.75" y="516.75" width="1.5" height="1.5"/><rect x="404.25" y="516.75" width="1.5" height="1.5"/><rect x="411.75" y="516.75" width="1.5" height="1.5"/><rect x="419.25" y="516.75" width="1.5" height="1.5"/><rect x="426.75" y="516.75" width="1.5" height="1.5"/><rect x="434.25" y="516.75" width="1.5" height="1.5"/><rect x="441.75" y="516.75" width="1.5" height="1.5"/><rect x="449.25" y="516.75" width="1.5" height="1.5"/><rect x="456.75" y="516.75" width="1.5" height="1.5"/><rect x="464.25" y="516.75" width="1.5" height="1.5"/><rect x="471.75" y="516.75" width="1.5" height="1.5"/><rect x="479.25" y="516.75" width="1.5" height="1.5"/><rect x="486.75" y="516.75" width="1.5" height="1.5"/><rect x="494.25" y="516.75" width="1.5" height="1.5"/><rect x="501.75" y="516.75" width="1.5" height="1.5"/><rect x="509.25" y="516.75" width="1.5" height="1.5"/><rect x="516.75" y="516.75" width="1.5" height="1.5"/><rect x="524.25" y="516.75" width="1.5" height="1.5"/><rect x="531.75" y="516.75" width="1.5" height="1.5"/><rect x="539.25" y="516.75" width="1.5" height="1.5"/><rect x="546.75" y="516.75" width="1.5" height="1.5"/><rect x="554.25" y="516.75" width="1.5" height="1.5"/><rect x="561.75" y="516.75" width="1.5" height="1.5"/><rect x="569.25" y="516.75" width="1.5" height="1.5"/><rect x="576.75" y="516.75" width="1.5" height="1.5"/><rect x="584.25" y="516.75" width="1.5" height="1.5"/><rect x="591.75" y="516.75" width="1.5" height="1.5"/><rect x="599.25" y="516.75" width="1.5" height="1.5"/><rect x="606.75" y="516.75" width="1.5" height="1.5"/><rect x="614.25" y="516.75" width="1.5" height="1.5"/><rect x="621.75" y="516.75" width="1.5" height="1.5"/><rect x="629.25" y="516.75" width="1.5" height="1.5"/><rect x="366.75" y="524.25" width="1.5" height="1.5"/><rect x="374.25" y="524.25" width="1.5" height="1.5"/><rect x="381.75" y="524.25" width="1.5" height="1.5"/><rect x="389.25" y="524.25" width="1.5" height="1.5"/><rect x="396.75" y="524.25" width="1.5" height="1.5"/><rect x="404.25" y="524.25" width="1.5" height="1.5"/><rect x="411.75" y="524.25" width="1.5" height="1.5"/><rect x="419.25" y="524.25" width="1.5" height="1.5"/><rect x="426.75" y="524.25" width="1.5" height="1.5"/><rect x="434.25" y="524.25" width="1.5" height="1.5"/><rect x="441.75" y="524.25" width="1.5" height="1.5"/><rect x="449.25" y="524.25" width="1.5" height="1.5"/><rect x="456.75" y="524.25" width="1.5" height="1.5"/><rect x="464.25" y="524.25" width="1.5" height="1.5"/><rect x="471.75" y="524.25" width="1.5" height="1.5"/><rect x="479.25" y="524.25" width="1.5" height="1.5"/><rect x="486.75" y="524.25" width="1.5" height="1.5"/><rect x="494.25" y="524.25" width="1.5" height="1.5"/><rect x="501.75" y="524.25" width="1.5" height="1.5"/><rect x="509.25" y="524.25" width="1.5" height="1.5"/><rect x="516.75" y="524.25" width="1.5" height="1.5"/><rect x="524.25" y="524.25" width="1.5" height="1.5"/><rect x="531.75" y="524.25" width="1.5" height="1.5"/><rect x="539.25" y="524.25" width="1.5" height="1.5"/><rect x="546.75" y="524.25" width="1.5" height="1.5"/><rect x="554.25" y="524.25" width="1.5" height="1.5"/><rect x="561.75" y="524.25" width="1.5" height="1.5"/><rect x="569.25" y="524.25" width="1.5" height="1.5"/><rect x="576.75" y="524.25" width="1.5" height="1.5"/><rect x="584.25" y="524.25" width="1.5" height="1.5"/><rect x="591.75" y="524.25" width="1.5" height="1.5"/><rect x="599.25" y="524.25" width="1.5" height="1.5"/><rect x="606.75" y="524.25" width="1.5" height="1.5"/><rect x="614.25" y="524.25" width="1.5" height="1.5"/><rect x="621.75" y="524.25" width="1.5" height="1.5"/><rect x="629.25" y="524.25" width="1.5" height="1.5"/><rect x="366.75" y="531.75" width="1.5" height="1.5"/><rect x="374.25" y="531.75" width="1.5" height="1.5"/><rect x="381.75" y="531.75" width="1.5" height="1.5"/><rect x="389.25" y="531.75" width="1.5" height="1.5"/><rect x="396.75" y="531.75" width="1.5" height="1.5"/><rect x="404.25" y="531.75" width="1.5" height="1.5"/><rect x="411.75" y="531.75" width="1.5" height="1.5"/><rect x="419.25" y="531.75" width="1.5" height="1.5"/><rect x="426.75" y="531.75" width="1.5" height="1.5"/><rect x="434.25" y="531.75" width="1.5" height="1.5"/><rect x="441.75" y="531.75" width="1.5" height="1.5"/><rect x="449.25" y="531.75" width="1.5" height="1.5"/><rect x="456.75" y="531.75" width="1.5" height="1.5"/><rect x="464.25" y="531.75" width="1.5" height="1.5"/><rect x="471.75" y="531.75" width="1.5" height="1.5"/><rect x="479.25" y="531.75" width="1.5" height="1.5"/><rect x="486.75" y="531.75" width="1.5" height="1.5"/><rect x="494.25" y="531.75" width="1.5" height="1.5"/><rect x="501.75" y="531.75" width="1.5" height="1.5"/><rect x="509.25" y="531.75" width="1.5" height="1.5"/><rect x="516.75" y="531.75" width="1.5" height="1.5"/><rect x="524.25" y="531.75" width="1.5" height="1.5"/><rect x="531.75" y="531.75" width="1.5" height="1.5"/><rect x="539.25" y="531.75" width="1.5" height="1.5"/><rect x="546.75" y="531.75" width="1.5" height="1.5"/><rect x="554.25" y="531.75" width="1.5" height="1.5"/><rect x="561.75" y="531.75" width="1.5" height="1.5"/><rect x="569.25" y="531.75" width="1.5" height="1.5"/><rect x="576.75" y="531.75" width="1.5" height="1.5"/><rect x="584.25" y="531.75" width="1.5" height="1.5"/><rect x="591.75" y="531.75" width="1.5" height="1.5"/><rect x="599.25" y="531.75" width="1.5" height="1.5"/><rect x="606.75" y="531.75" width="1.5" height="1.5"/><rect x="614.25" y="531.75" width="1.5" height="1.5"/><rect x="621.75" y="531.75" width="1.5" height="1.5"/><rect x="629.25" y="531.75" width="1.5" height="1.5"/><rect x="366.75" y="539.25" width="1.5" height="1.5"/><rect x="374.25" y="539.25" width="1.5" height="1.5"/><rect x="381.75" y="539.25" width="1.5" height="1.5"/><rect x="389.25" y="539.25" width="1.5" height="1.5"/><rect x="396.75" y="539.25" width="1.5" height="1.5"/><rect x="404.25" y="539.25" width="1.5" height="1.5"/><rect x="411.75" y="539.25" width="1.5" height="1.5"/><rect x="419.25" y="539.25" width="1.5" height="1.5"/><rect x="426.75" y="539.25" width="1.5" height="1.5"/><rect x="434.25" y="539.25" width="1.5" height="1.5"/><rect x="441.75" y="539.25" width="1.5" height="1.5"/><rect x="449.25" y="539.25" width="1.5" height="1.5"/><rect x="456.75" y="539.25" width="1.5" height="1.5"/><rect x="464.25" y="539.25" width="1.5" height="1.5"/><rect x="471.75" y="539.25" width="1.5" height="1.5"/><rect x="479.25" y="539.25" width="1.5" height="1.5"/><rect x="486.75" y="539.25" width="1.5" height="1.5"/><rect x="494.25" y="539.25" width="1.5" height="1.5"/><rect x="501.75" y="539.25" width="1.5" height="1.5"/><rect x="509.25" y="539.25" width="1.5" height="1.5"/><rect x="516.75" y="539.25" width="1.5" height="1.5"/><rect x="524.25" y="539.25" width="1.5" height="1.5"/><rect x="531.75" y="539.25" width="1.5" height="1.5"/><rect x="539.25" y="539.25" width="1.5" height="1.5"/><rect x="546.75" y="539.25" width="1.5" height="1.5"/><rect x="554.25" y="539.25" width="1.5" height="1.5"/><rect x="561.75" y="539.25" width="1.5" height="1.5"/><rect x="569.25" y="539.25" width="1.5" height="1.5"/><rect x="576.75" y="539.25" width="1.5" height="1.5"/><rect x="584.25" y="539.25" width="1.5" height="1.5"/><rect x="591.75" y="539.25" width="1.5" height="1.5"/><rect x="599.25" y="539.25" width="1.5" height="1.5"/><rect x="606.75" y="539.25" width="1.5" height="1.5"/><rect x="614.25" y="539.25" width="1.5" height="1.5"/><rect x="621.75" y="539.25" width="1.5" height="1.5"/><rect x="629.25" y="539.25" width="1.5" height="1.5"/><rect x="366.75" y="546.75" width="1.5" height="1.5"/><rect x="374.25" y="546.75" width="1.5" height="1.5"/><rect x="381.75" y="546.75" width="1.5" height="1.5"/><rect x="389.25" y="546.75" width="1.5" height="1.5"/><rect x="396.75" y="546.75" width="1.5" height="1.5"/><rect x="404.25" y="546.75" width="1.5" height="1.5"/><rect x="411.75" y="546.75" width="1.5" height="1.5"/><rect x="419.25" y="546.75" width="1.5" height="1.5"/><rect x="426.75" y="546.75" width="1.5" height="1.5"/><rect x="434.25" y="546.75" width="1.5" height="1.5"/><rect x="441.75" y="546.75" width="1.5" height="1.5"/><rect x="449.25" y="546.75" width="1.5" height="1.5"/><rect x="456.75" y="546.75" width="1.5" height="1.5"/><rect x="464.25" y="546.75" width="1.5" height="1.5"/><rect x="471.75" y="546.75" width="1.5" height="1.5"/><rect x="479.25" y="546.75" width="1.5" height="1.5"/><rect x="486.75" y="546.75" width="1.5" height="1.5"/><rect x="494.25" y="546.75" width="1.5" height="1.5"/><rect x="501.75" y="546.75" width="1.5" height="1.5"/><rect x="509.25" y="546.75" width="1.5" height="1.5"/><rect x="516.75" y="546.75" width="1.5" height="1.5"/><rect x="524.25" y="546.75" width="1.5" height="1.5"/><rect x="531.75" y="546.75" width="1.5" height="1.5"/><rect x="539.25" y="546.75" width="1.5" height="1.5"/><rect x="546.75" y="546.75" width="1.5" height="1.5"/><rect x="554.25" y="546.75" width="1.5" height="1.5"/><rect x="561.75" y="546.75" width="1.5" height="1.5"/><rect x="569.25" y="546.75" width="1.5" height="1.5"/><rect x="576.75" y="546.75" width="1.5" height="1.5"/><rect x="584.25" y="546.75" width="1.5" height="1.5"/><rect x="591.75" y="546.75" width="1.5" height="1.5"/><rect x="599.25" y="546.75" width="1.5" height="1.5"/><rect x="606.75" y="546.75" width="1.5" height="1.5"/><rect x="614.25" y="546.75" width="1.5" height="1.5"/><rect x="621.75" y="546.75" width="1.5" height="1.5"/><rect x="629.25" y="546.75" width="1.5" height="1.5"/></g></svg>
<svg style="left:0;top:0" width="880" height="578"><rect x="382.5" y="157.5" width="14" height="14" fill="#f3eff5" stroke="#888" stroke-width="1"/><circle cx="453" cy="176" r="18.2" fill="#dc143c" stroke="#111" stroke-width="1.6"/></svg>
<div style="left:638px;top:134px;width:12px;height:420px;background:#4a4a4a"></div>
<div style="left:638px;top:134px;width:12px;height:13px;background:#5a5a5a;border-bottom:2px solid #1f1f1f"></div>
<div style="left:638px;top:148px;width:12px;height:364px;background:#585858;border-bottom:1px solid #3a3a3a"></div>
<div style="left:638px;top:540px;width:12px;height:14px;background:#585858;border-top:1px solid #333;border-bottom:1px solid #333"></div>
<div style="left:638px;top:554px;width:12px;height:12px;background:#555"></div>
<svg style="left:0;top:0" width="880" height="578"><polygon points="641.5,143.5 647.5,143.5 644.5,139.5" fill="none" stroke="#ddd" stroke-width="0.9"/><polygon points="641.5,544.5 647.5,544.5 644.5,548.5" fill="none" stroke="#ddd" stroke-width="0.9"/></svg>
<div style="left:359px;top:554px;width:280px;height:12px;background:#545454;border-top:1px solid #333"></div>
<div style="left:371px;top:555px;width:117px;height:11px;background:#5f5f5f"></div>
<div style="left:624px;top:555px;width:14px;height:11px;background:#585858;border-left:1px solid #333"></div>
<svg style="left:0;top:0" width="880" height="578"><polygon points="368.5,556.5 368.5,563.5 364.5,560" fill="none" stroke="#ddd" stroke-width="0.9"/><polygon points="629.5,556.5 629.5,563.5 633.5,560" fill="none" stroke="#ddd" stroke-width="0.9"/></svg>
<div class="spl" style="left:347px;top:566px;width:303px;height:5px;"></div>
<div style="left:347px;top:571px;width:303px;height:7px;background:#555;border-top:1px solid #444"></div>
<div style="left:420px;top:571px;width:1px;height:7px;background:#333"></div>
<div style="left:502px;top:571px;width:1px;height:7px;background:#333"></div>
<div style="left:567px;top:571px;width:1px;height:7px;background:#333"></div>
<div class="spl" style="left:650px;top:112px;width:5px;height:466px;"></div>
<div style="left:655px;top:112px;width:225px;height:460px;background:#545454"></div>
<div class="t" style="left:781px;top:116px;color:#f4f4f4;-webkit-text-stroke:0.45px">Modbus RTU</div>
<div style="left:655px;top:131px;width:225px;height:20px;background:#4c4c4c;border-top:1px solid #6a6a6a"></div>
<div style="left:655px;top:131px;width:20px;height:20px;background:#575757;border-right:1px solid #2e2e2e;border-top:1px solid #6a6a6a"></div>
<div style="left:675px;top:131px;width:20px;height:20px;background:#575757;border-right:1px solid #2e2e2e;border-top:1px solid #6a6a6a"></div>
<div style="left:695px;top:131px;width:20px;height:20px;background:#575757;border-right:1px solid #2e2e2e;border-top:1px solid #6a6a6a"></div>
<svg style="left:0;top:0" width="880" height="578"><g stroke="#ddd" fill="none" stroke-width="0.9"><path d="M660.5 135.5 H669.5 V138.5 H660.5 Z M660.5 140.5 H669.5"/><line x1="665" y1="141" x2="665" y2="146"/></g><polygon points="662,144 668,144 665,147" fill="#ddd"/><g stroke="#ddd" fill="none" stroke-width="0.9"><path d="M682 136 H692 L688.5 141 V147 H685.5 V141 Z"/><path d="M679 137 H681 M679 141 H681 M679 145 H681"/></g><g stroke="#ddd" fill="none" stroke-width="0.8"><rect x="705.5" y="135.5" width="5" height="10"/><path d="M705.5 138.5 H710.5 M705.5 141.5 H710.5 M699 137 H702 M699 141 L703 141 M699 145 H702"/></g></svg>
<div style="left:656px;top:151px;width:224px;height:13px;background:#575757;border-left:1px solid #6a6a6a"></div>
<div style="left:803px;top:151px;width:77px;height:12px;background:#4a4a4a"></div>
<div class="t" style="left:682px;top:145px;color:#cfcfcf;clip-path:inset(6px 0 0 0)">Ссылается</div>
<div class="t" style="left:808px;top:145px;color:#999;clip-path:inset(6px 0 0 0)">Библиотеки.Стан</div>
<div style="left:656px;top:184px;width:1px;height:388px;background:#6a6a6a"></div>
<div style="left:656px;top:164px;width:224px;height:20px;background:#575757;border-top:1px solid #787878;border-bottom:1px solid #2a2a2a;border-left:1px solid #6a6a6a"></div>
<div class="t" style="left:666px;top:168px;">Задача</div>
<div class="t" style="left:682px;top:190px;width:136px;overflow:hidden;">Период, мс</div>
<div style="left:803px;top:186px;width:77px;height:19px;background:#3f3f3f;border-top:1px solid #333;border-left:1px solid #4a4a4a"></div>
<div class="t" style="left:807px;top:190px;">100</div>
<div class="t" style="left:682px;top:211px;width:136px;overflow:hidden;">Приоритет</div>
<div style="left:803px;top:207px;width:77px;height:19px;background:#3f3f3f;border-top:1px solid #333;border-left:1px solid #4a4a4a"></div>
<div class="t" style="left:807px;top:211px;">100</div>
<div class="t" style="left:682px;top:232px;width:136px;overflow:hidden;">Подключение по условию</div>
<div style="left:804px;top:232px;width:12px;height:12px;border:1px solid #e0e0e0"></div>
<div class="t" style="left:682px;top:253px;width:136px;overflow:hidden;">Выполнение по условию</div>
<div style="left:804px;top:253px;width:12px;height:12px;border:1px solid #e0e0e0"></div>
<div class="t" style="left:682px;top:274px;width:136px;overflow:hidden;">Выполнять на резервном</div>
<div style="left:804px;top:274px;width:12px;height:12px;border:1px solid #e0e0e0"></div>
<div class="t" style="left:682px;top:295px;width:136px;overflow:hidden;">Способ записи</div>
<div class="t" style="left:805px;top:296px;">По изменению</div>
<div class="t" style="left:682px;top:316px;width:136px;overflow:hidden;">Формировать отказ при отка</div>
<div style="left:804px;top:316px;width:12px;height:12px;border:1px solid #e0e0e0"></div>
<div class="t" style="left:682px;top:337px;width:136px;overflow:hidden;">Задержка записи при старте</div>
<div style="left:803px;top:333px;width:77px;height:19px;background:#3f3f3f;border-top:1px solid #333;border-left:1px solid #4a4a4a"></div>
<div class="t" style="left:807px;top:337px;">0</div>
<div style="left:656px;top:355px;width:224px;height:20px;background:#575757;border-top:1px solid #787878;border-bottom:1px solid #2a2a2a;border-left:1px solid #6a6a6a"></div>
<div class="t" style="left:666px;top:359px;">Протокол</div>
<div class="t" style="left:682px;top:382px;width:136px;overflow:hidden;">Таймаут</div>
<div style="left:803px;top:378px;width:77px;height:19px;background:#3f3f3f;border-top:1px solid #333;border-left:1px solid #4a4a4a"></div>
<div class="t" style="left:807px;top:382px;">100</div>
<div class="t" style="left:682px;top:403px;width:136px;overflow:hidden;">Количество повторов при не</div>
<div style="left:803px;top:399px;width:77px;height:19px;background:#3f3f3f;border-top:1px solid #333;border-left:1px solid #4a4a4a"></div>
<div class="t" style="left:807px;top:403px;">2</div>
<div class="t" style="left:682px;top:424px;width:136px;overflow:hidden;">Интервал между запросами</div>
<div style="left:803px;top:420px;width:77px;height:19px;background:#3f3f3f;border-top:1px solid #333;border-left:1px solid #4a4a4a"></div>
<div class="t" style="left:807px;top:424px;">0</div>
<div style="left:656px;top:442px;width:224px;height:20px;background:#575757;border-top:1px solid #787878;border-bottom:1px solid #2a2a2a;border-left:1px solid #6a6a6a"></div>
<div class="t" style="left:666px;top:446px;">Порт</div>
<div class="t" style="left:682px;top:468px;width:136px;overflow:hidden;">Номер порта</div>
<div style="left:803px;top:464px;width:77px;height:19px;background:#3f3f3f;border-top:1px solid #333;border-left:1px solid #4a4a4a"></div>
<div class="t" style="left:807px;top:468px;">2</div>
<div class="t" style="left:682px;top:489px;width:136px;overflow:hidden;">Скорость</div>
<div class="t" style="left:805px;top:490px;">9600</div>
<div class="t" style="left:682px;top:510px;width:136px;overflow:hidden;">Четность</div>
<div class="t" style="left:805px;top:511px;">Нет</div>
<div class="t" style="left:682px;top:531px;width:136px;overflow:hidden;">Стоп бит</div>
<div class="t" style="left:805px;top:532px;">1</div>
<div class="t" style="left:682px;top:552px;width:136px;overflow:hidden;">Разрядность символа</div>
<div class="t" style="left:805px;top:553px;">8</div>
<div style="left:813px;top:468px;width:1px;height:10px;background:#eee"></div>
<div class="spl" style="left:655px;top:567px;width:225px;height:5px;"></div>
<div style="left:655px;top:572px;width:225px;height:6px;background:#545454"></div>
<div style="left:707px;top:572px;width:94px;height:6px;background:#f3eff5;border-left:1px solid #111;border-right:1px solid #333"></div>
<div style="left:801px;top:572px;width:79px;height:6px;background:#efedf1"></div>
<div style="left:55px;top:335px;width:48px;height:17px;background:#3c3c3c"></div>
<svg style="left:0;top:0" width="880" height="578"><rect x="10" y="137" width="17" height="17" fill="#5aa66c"/><g stroke="#eef" fill="none" stroke-width="0.8"><rect x="13.5" y="141.5" width="7" height="6"/><path d="M15 150.5 H20 M17 148 V150"/><rect x="21.5" y="139.5" width="3" height="12" rx="1"/></g><polygon points="1,144.5 6,144.5 3.5,147.5" fill="#b8b8b8"/><rect x="20" y="155" width="17" height="17" fill="#5aa66c"/><g stroke="#eef" fill="none" stroke-width="0.8"><rect x="22.5" y="160.5" width="12" height="6" rx="1"/><path d="M25.5 161 V166 M28.5 161 V166 M31.5 161 V166"/></g><polygon points="11,162.5 16,162.5 13.5,165.5" fill="#b8b8b8"/><rect x="29" y="173" width="17" height="17" fill="#3b3b3b"/><g stroke="#f2f2f2" fill="none" stroke-width="0.95" stroke-linejoin="round"><path d="M31.75 187.5 V177.5 H35.9 L37.5 176 H41.5 V179.5"/><path d="M31.75 187.5 L33.3 181.5 H38 L39.5 180 H43.6 L42.3 187.5 Z"/></g><rect x="29" y="191" width="17" height="17" fill="#3b3b3b"/><g stroke="#f2f2f2" fill="none" stroke-width="0.95" stroke-linejoin="round"><path d="M31.75 205.5 V195.5 H35.9 L37.5 194 H41.5 V197.5"/><path d="M31.75 205.5 L33.3 199.5 H38 L39.5 198 H43.6 L42.3 205.5 Z"/></g><polygon points="21.5,196.5 24.5,199.5 21.5,202.5" fill="none" stroke="#9a9a9a" stroke-width="0.9"/><rect x="29" y="209" width="17" height="17" fill="#3b3b3b"/><g stroke="#f2f2f2" fill="none" stroke-width="0.95" stroke-linejoin="round"><path d="M31.75 223.5 V213.5 H35.9 L37.5 212 H41.5 V215.5"/><path d="M31.75 223.5 L33.3 217.5 H38 L39.5 216 H43.6 L42.3 223.5 Z"/></g><rect x="29" y="227" width="17" height="17" fill="#3b3b3b"/><g stroke="#f2f2f2" fill="none" stroke-width="0.95" stroke-linejoin="round"><path d="M31.75 241.5 V231.5 H35.9 L37.5 230 H41.5 V233.5"/><path d="M31.75 241.5 L33.3 235.5 H38 L39.5 234 H43.6 L42.3 241.5 Z"/></g><rect x="29" y="245" width="17" height="17" fill="#3b3b3b"/><g stroke="#f2f2f2" fill="none" stroke-width="0.95" stroke-linejoin="round"><path d="M31.75 259.5 V249.5 H35.9 L37.5 248 H41.5 V251.5"/><path d="M31.75 259.5 L33.3 253.5 H38 L39.5 252 H43.6 L42.3 259.5 Z"/></g><rect x="29" y="263" width="17" height="17" fill="#3b3b3b"/><g stroke="#f2f2f2" fill="none" stroke-width="0.95" stroke-linejoin="round"><path d="M31.75 277.5 V267.5 H35.9 L37.5 266 H41.5 V269.5"/><path d="M31.75 277.5 L33.3 271.5 H38 L39.5 270 H43.6 L42.3 277.5 Z"/></g><polygon points="21.5,268.5 24.5,271.5 21.5,274.5" fill="none" stroke="#9a9a9a" stroke-width="0.9"/><rect x="29" y="281" width="17" height="17" fill="#3b3b3b"/><g stroke="#f2f2f2" fill="none" stroke-width="0.95" stroke-linejoin="round"><path d="M31.75 295.5 V285.5 H35.9 L37.5 284 H41.5 V287.5"/><path d="M31.75 295.5 L33.3 289.5 H38 L39.5 288 H43.6 L42.3 295.5 Z"/></g><polygon points="21.5,286.5 24.5,289.5 21.5,292.5" fill="none" stroke="#9a9a9a" stroke-width="0.9"/><rect x="29" y="299" width="17" height="17" fill="#3b3b3b"/><g stroke="#f2f2f2" fill="none" stroke-width="0.95" stroke-linejoin="round"><path d="M31.75 313.5 V303.5 H35.9 L37.5 302 H41.5 V305.5"/><path d="M31.75 313.5 L33.3 307.5 H38 L39.5 306 H43.6 L42.3 313.5 Z"/></g><rect x="29" y="317" width="17" height="17" fill="#3b3b3b"/><g stroke="#f2f2f2" fill="none" stroke-width="0.95" stroke-linejoin="round"><path d="M31.75 331.5 V321.5 H35.9 L37.5 320 H41.5 V323.5"/><path d="M31.75 331.5 L33.3 325.5 H38 L39.5 324 H43.6 L42.3 331.5 Z"/></g><polygon points="20,324.5 25,324.5 22.5,327.5" fill="#b8b8b8"/><rect x="38" y="335" width="17" height="17" fill="#5aa66c"/><g stroke="#eef" fill="none" stroke-width="0.8"><path d="M41 344 L45 339 L48 343 L51 340 M41 347.5 H52 M42 347.5 V349.5 M45 347.5 V349.5 M48 347.5 V349.5 M51 347.5 V349.5"/><rect x="48.5" y="344.5" width="3" height="2"/></g><rect x="20" y="353" width="17" height="17" fill="#3b3b3b"/><g stroke="#f2f2f2" fill="none" stroke-width="0.95" stroke-linejoin="round"><path d="M22.75 367.5 V357.5 H26.9 L28.5 356 H32.5 V359.5"/><path d="M22.75 367.5 L24.3 361.5 H29 L30.5 360 H34.6 L33.3 367.5 Z"/></g><polygon points="12.5,358.5 15.5,361.5 12.5,364.5" fill="none" stroke="#9a9a9a" stroke-width="0.9"/><rect x="10" y="374" width="17" height="17" fill="#d6705f"/><g stroke="#fde" fill="none" stroke-width="0.8"><rect x="13.5" y="377.5" width="6" height="6"/><rect x="16.5" y="380.5" width="7" height="7"/><circle cx="16.5" cy="380.5" r="1"/><circle cx="20" cy="384" r="1"/></g><polygon points="3.5,379.5 6.5,382.5 3.5,385.5" fill="none" stroke="#9a9a9a" stroke-width="0.9"/><rect x="10" y="395" width="17" height="17" fill="#7a795b"/><g stroke="#f4f4e8" fill="none" stroke-width="0.8"><rect x="13.5" y="398.5" width="3" height="7" rx="1"/><rect x="17.5" y="398.5" width="3" height="7" rx="1"/><rect x="21.5" y="401.5" width="2" height="5"/><path d="M13 407.5 H24 M15 409.5 H22"/></g><polygon points="1,402.5 6,402.5 3.5,405.5" fill="#b8b8b8"/><rect x="20" y="413" width="17" height="17" fill="#7a795b"/><g stroke="#f4f4e8" fill="none" stroke-width="0.8"><path d="M24.5 417 V418 M23 420.5 H26 M24.5 420.5 V425"/><rect x="27.5" y="416.5" width="3" height="9" rx="1"/><rect x="31.5" y="416.5" width="3" height="9" rx="1"/><path d="M23 427.5 H34"/></g><rect x="20" y="431" width="17" height="17" fill="#7a795b"/><g stroke="#f4f4e8" fill="none" stroke-width="0.8"><rect x="23.5" y="434.5" width="4" height="9" rx="1"/><rect x="29.5" y="434.5" width="4" height="9" rx="1"/><path d="M23 445.5 H34"/></g><polygon points="12.5,436.5 15.5,439.5 12.5,442.5" fill="none" stroke="#9a9a9a" stroke-width="0.9"/><rect x="20" y="449" width="17" height="17" fill="#7a795b"/><g stroke="#f4f4e8" fill="none" stroke-width="0.8"><rect x="23.5" y="452.5" width="4" height="9" rx="1"/><rect x="29.5" y="452.5" width="4" height="9" rx="1"/><path d="M23 463.5 H34"/></g><polygon points="12.5,454.5 15.5,457.5 12.5,460.5" fill="none" stroke="#9a9a9a" stroke-width="0.9"/><rect x="20" y="467" width="17" height="17" fill="#7a795b"/><g stroke="#f4f4e8" fill="none" stroke-width="0.8"><rect x="23.5" y="470.5" width="4" height="9" rx="1"/><rect x="29.5" y="470.5" width="4" height="9" rx="1"/><path d="M23 481.5 H34"/></g></svg>
<div class="t" style="left:31px;top:140px;">Система</div>
<div class="t" style="left:41px;top:158px;">M3000-T 1</div>
<div class="t" style="left:50px;top:176px;">Параметры</div>
<div class="t" style="left:50px;top:194px;">Графический интерфейс</div>
<div class="t" style="left:50px;top:212px;">Программы</div>
<div class="t" style="left:50px;top:230px;">Сообщения</div>
<div class="t" style="left:50px;top:248px;">Отчеты</div>
<div class="t" style="left:50px;top:266px;">Архивы</div>
<div class="t" style="left:50px;top:284px;">Задачи</div>
<div class="t" style="left:50px;top:302px;">Внешние каналы</div>
<div class="t" style="left:50px;top:320px;">Протоколы</div>
<div class="t" style="left:59px;top:338px;">Modbus RTU</div>
<div class="t" style="left:41px;top:356px;">Безопасность</div>
<div class="t" style="left:31px;top:377px;">Объекты</div>
<div class="t" style="left:31px;top:398px;">Библиотеки</div>
<div class="t" style="left:41px;top:416px;">Локальная</div>
<div class="t" style="left:41px;top:434px;">BaseObjects</div>
<div class="t" style="left:41px;top:452px;">Lib M3000-BB-0</div>
<div class="t" style="left:41px;top:470px;">Bolid</div>
<div style="left:94px;top:155px;width:13px;height:17px;background:#3a3a3a"></div>
<svg style="left:0;top:0" width="880" height="578"><g stroke="#eee" fill="none" stroke-width="0.9"><path d="M96.5 158.5 H99.5 L101 160.5 H103.5 V164"/><circle cx="96.5" cy="158.5" r="1"/></g><polygon points="100.5,163.5 106.5,163.5 103.5,167" fill="#eee"/><rect x="102.8" y="168.5" width="1.5" height="1.5" fill="#eee"/></svg>
<div style="left:96px;top:431px;width:7px;height:16px;background:#333"></div>
<svg style="left:0;top:0" width="880" height="578"><path d="M98 439.5 H103" stroke="#eee" stroke-width="1.5"/><polygon points="97,439.5 100,436.5 100,442.5" fill="#eee"/></svg>
<svg style="left:0;top:0" width="880" height="578"><g fill="none" stroke="#f51414" stroke-width="2.5"><ellipse cx="65.5" cy="163.5" rx="32" ry="9"/><ellipse cx="90" cy="344" rx="37" ry="9.5"/><ellipse cx="80" cy="457.3" rx="47" ry="9"/></g></svg>
<div style="left:103px;top:340px;width:212px;height:223px;background:#545454;border:1px solid #8a8a8a"></div>
<div style="left:104px;top:341px;width:210px;height:14px;background:#7c7c7c"></div>
<div class="t" style="left:116px;top:343.5px;">Добавить</div>
<div class="t" style="left:116px;top:356.9px;">Перейти</div>
<div class="t" style="left:116px;top:382.5px;">Справка</div>
<div class="t" style="left:116px;top:396.0px;">Масштаб</div>
<div class="t" style="left:116px;top:409.5px;">Дерево</div>
<div class="t" style="left:116px;top:423.0px;">Поиск</div>
<div class="t" style="left:116px;top:435.5px;">Удалить <i style="margin-left:1px;color:#d8d8d8">Modbus RTU</i></div>
<div class="t" style="left:116px;top:449.5px;">Копировать <i style="margin-left:1px;color:#d8d8d8">Modbus RTU</i></div>
<div class="t" style="left:116px;top:462.5px;">Вырезать <i style="margin-left:1px;color:#d8d8d8">Modbus RTU</i></div>
<div class="t" style="left:116px;top:497.0px;">Восстановить умолчания</div>
<div class="t" style="left:116px;top:510.5px;">Переименовать</div>
<div class="t" style="left:116px;top:524.0px;">Открыть в панели веток</div>
<div class="t" style="left:116px;top:537.5px;">Сменить тип</div>
<div class="t" style="left:116px;top:551.0px;">Экспортировать...</div>
<svg style="left:0;top:0" width="880" height="578"><polygon points="306,345 306,351 310,348" fill="#e8e8e8"/><polygon points="306,358.4 306,364.4 310,361.4" fill="#e8e8e8"/><polygon points="306,384 306,390 310,387" fill="#e8e8e8"/><polygon points="306,397.5 306,403.5 310,400.5" fill="#e8e8e8"/><polygon points="306,411 306,417 310,414" fill="#e8e8e8"/><polygon points="306,424.5 306,430.5 310,427.5" fill="#e8e8e8"/></svg>
<div style="left:126px;top:374px;width:188px;height:2px;background:#f4f4f4"></div>
<div class="t" style="left:118px;top:479px;">Дублировать <i style="margin-left:1px;color:#d8d8d8">Modbus RTU</i></div>
<div style="left:229px;top:476px;width:23px;height:17px;background:#404040;border:1px solid #6a6a6a"></div>
<div class="t" style="left:233px;top:479px;font-size:10px">1</div>
<div class="t" style="left:255px;top:479px;color:#000">раз</div>
<div class="t" style="left:276px;top:479px;">Ctrl+D</div>
<div style="left:314px;top:339px;width:203px;height:134px;background:#545454"></div>
<div style="left:314px;top:393px;width:203px;height:13px;background:#7c7c7c"></div>
<div class="t" style="left:327px;top:340.85px;">Модуль ввода-вывода ОВЕН Modbus RTU</div>
<div class="t" style="left:327px;top:354.55px;">Модуль ввода-вывода Базовые устройства</div>
<div class="t" style="left:327px;top:367.55px;">Модуль ввода-вывода M-7000</div>
<div class="t" style="left:327px;top:381.05px;">Модуль ввода-вывода tmSeries (Modbus)</div>
<div class="t" style="left:327px;top:394.75px;">Модуль ввода-вывода</div>
<div class="t" style="left:327px;top:408.75px;">Программы</div>
<div class="t" style="left:327px;top:421.75px;">Модуль Modbus RTU</div>
<div class="t" style="left:327px;top:435.45px;">Окно</div>
<div class="t" style="left:327px;top:449.25px;">Сообщение Тревога</div>
<div class="t" style="left:327px;top:462.25px;">Отчет</div>
<svg style="left:0;top:0" width="880" height="578"><polygon points="509,342.6 509,348.6 513,345.6" fill="#e8e8e8"/><polygon points="509,356.3 509,362.3 513,359.3" fill="#e8e8e8"/><polygon points="509,369.3 509,375.3 513,372.3" fill="#e8e8e8"/><polygon points="509,382.8 509,388.8 513,385.8" fill="#e8e8e8"/><polygon points="509,396.5 509,402.5 513,399.5" fill="#e8e8e8"/><polygon points="509,410.5 509,416.5 513,413.5" fill="#e8e8e8"/></svg>
<div style="left:517px;top:391px;width:146px;height:27px;background:#545454"></div>
<div style="left:517px;top:391px;width:146px;height:13px;background:#7c7c7c;border-left:2px solid #8c8c8c"></div>
<div class="t" style="left:530px;top:391.5px;transform:scaleX(0.85)">M3000-BB-0010</div>
<div class="t" style="left:530px;top:405.5px;transform:scaleX(0.85)">M3000-BB-0010 Systemparam</div>
<svg style="left:0;top:0" width="880" height="578"><g fill="none" stroke="#f51414" stroke-width="2.4"><ellipse cx="135.5" cy="348.5" rx="28.5" ry="8.3"/></g><g fill="none" stroke="#f51414" stroke-width="2"><ellipse cx="373.7" cy="400.5" rx="53.7" ry="7.9"/><ellipse cx="562.6" cy="397" rx="41" ry="6.6"/></g></svg>
<div style="left:0px;top:576px;width:227px;height:1px;background:#3e3e3e"></div>
<div style="left:0px;top:577px;width:227px;height:1px;background:#e4e4e4"></div>
</body></html>
